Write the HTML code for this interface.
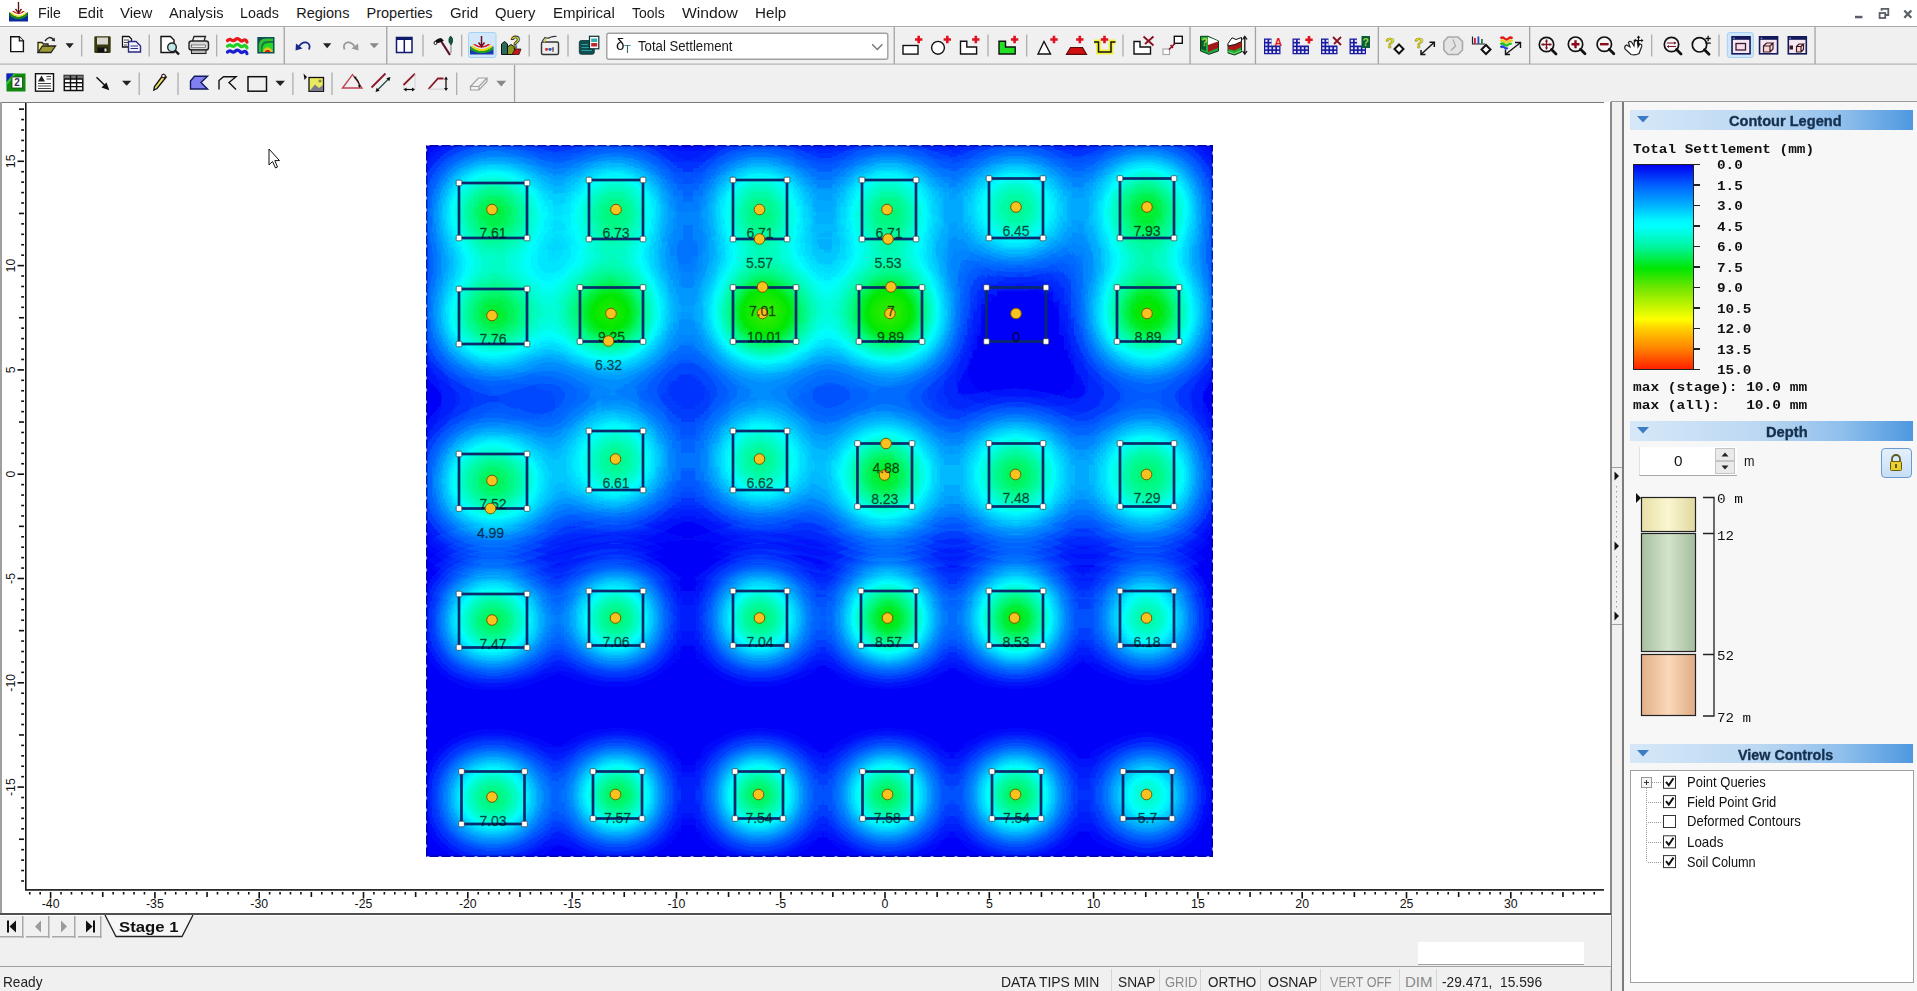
<!DOCTYPE html><html><head><meta charset="utf-8"><style>
*{box-sizing:border-box}
html,body{margin:0;padding:0}
body{width:1917px;height:991px;overflow:hidden;position:relative;background:#f0f0f0;font-family:"Liberation Sans",sans-serif;color:#000}
.a{position:absolute}
.t{position:absolute;white-space:nowrap;line-height:1}
</style></head><body>

<div class="a" style="left:0;top:0;width:1917px;height:26px;background:#fff"></div>
<div class="a" style="left:0;top:26px;width:1917px;height:1px;background:#a8a8a8"></div>
<div class="t" style="left:37.90px;top:6.03px;font-size:14.5px;font-family:'Liberation Sans',sans-serif;color:#1a1a1a;transform:scaleX(0.9761);transform-origin:0 0;">File</div>
<div class="t" style="left:77.50px;top:6.03px;font-size:14.5px;font-family:'Liberation Sans',sans-serif;color:#1a1a1a;transform:scaleX(1.0086);transform-origin:0 0;">Edit</div>
<div class="t" style="left:119.50px;top:6.03px;font-size:14.5px;font-family:'Liberation Sans',sans-serif;color:#1a1a1a;transform:scaleX(1.0335);transform-origin:0 0;">View</div>
<div class="t" style="left:168.70px;top:6.03px;font-size:14.5px;font-family:'Liberation Sans',sans-serif;color:#1a1a1a;transform:scaleX(1.0096);transform-origin:0 0;">Analysis</div>
<div class="t" style="left:240.30px;top:6.03px;font-size:14.5px;font-family:'Liberation Sans',sans-serif;color:#1a1a1a;transform:scaleX(0.9848);transform-origin:0 0;">Loads</div>
<div class="t" style="left:296.20px;top:6.03px;font-size:14.5px;font-family:'Liberation Sans',sans-serif;color:#1a1a1a;">Regions</div>
<div class="t" style="left:366.50px;top:6.03px;font-size:14.5px;font-family:'Liberation Sans',sans-serif;color:#1a1a1a;">Properties</div>
<div class="t" style="left:449.50px;top:6.03px;font-size:14.5px;font-family:'Liberation Sans',sans-serif;color:#1a1a1a;transform:scaleX(1.0295);transform-origin:0 0;">Grid</div>
<div class="t" style="left:495.30px;top:6.03px;font-size:14.5px;font-family:'Liberation Sans',sans-serif;color:#1a1a1a;transform:scaleX(1.0232);transform-origin:0 0;">Query</div>
<div class="t" style="left:552.50px;top:6.03px;font-size:14.5px;font-family:'Liberation Sans',sans-serif;color:#1a1a1a;transform:scaleX(1.0351);transform-origin:0 0;">Empirical</div>
<div class="t" style="left:632.00px;top:6.03px;font-size:14.5px;font-family:'Liberation Sans',sans-serif;color:#1a1a1a;transform:scaleX(0.9662);transform-origin:0 0;">Tools</div>
<div class="t" style="left:682.00px;top:6.03px;font-size:14.5px;font-family:'Liberation Sans',sans-serif;color:#1a1a1a;transform:scaleX(1.0802);transform-origin:0 0;">Window</div>
<div class="t" style="left:754.50px;top:6.03px;font-size:14.5px;font-family:'Liberation Sans',sans-serif;color:#1a1a1a;transform:scaleX(1.0465);transform-origin:0 0;">Help</div>
<svg class="a" style="left:0;top:0" width="1917" height="102" viewBox="0 0 1917 102">
<g><path d="M9 12 Q18.5 22 28 12 V21.5 H9Z" fill="#0a2aa0"/><path d="M9.5 12.5 Q18.5 21 27.5 12.5 V15.5 Q18.5 23 9.5 15.5Z" fill="#1a8a1a"/><path d="M10.5 11.5 Q18.5 19.5 26.5 11.5 L26.5 13 Q18.5 20.5 10.5 13Z" fill="#e8d800"/><path d="M12 11 Q18.5 17.5 25 11 L23 11 Q18.5 15 14 11Z" fill="#d01010"/><path d="M18.5 2 V12" stroke="#5a1010" stroke-width="1.3"/><path d="M15.5 9 L18.5 13 L21.5 9" fill="none" stroke="#5a1010" stroke-width="1.3"/></g>
<rect x="1855" y="15.8" width="7.4" height="2.5" fill="#5a6068"/>
<path d="M1881.6 10.8 V8.8 H1888.3 V15 H1886" fill="none" stroke="#5a6068" stroke-width="1.8"/><rect x="1879.6" y="13" width="5.6" height="5" fill="none" stroke="#5a6068" stroke-width="1.8"/>
<path d="M1904.3 10.5 L1911.3 17.8 M1911.3 10.5 L1904.3 17.8" stroke="#5a6068" stroke-width="2.2"/>
<rect x="0" y="27" width="1917" height="37" fill="#f0f0f0"/>
<rect x="0" y="65" width="1917" height="37" fill="#f0f0f0"/>
<rect x="0" y="63.5" width="1917" height="1.2" fill="#b4b4b4"/>
<rect x="0" y="27" width="1815" height="1" fill="#f8f8f8"/>
<rect x="283.59999999999997" y="27" width="1.3" height="37" fill="#a4a4a4"/>
<rect x="386.09999999999997" y="27" width="1.3" height="37" fill="#a4a4a4"/>
<rect x="893.6" y="27" width="1.3" height="37" fill="#a4a4a4"/>
<rect x="1189.4" y="27" width="1.3" height="37" fill="#a4a4a4"/>
<rect x="1254.8000000000002" y="27" width="1.3" height="37" fill="#a4a4a4"/>
<rect x="1377.7" y="27" width="1.3" height="37" fill="#a4a4a4"/>
<rect x="1529.0" y="27" width="1.3" height="37" fill="#a4a4a4"/>
<rect x="1814.4" y="27" width="1.3" height="37" fill="#a4a4a4"/>
<rect x="81.10000000000001" y="34.5" width="1.2" height="22" fill="#a8a8a8"/>
<rect x="148.6" y="34.5" width="1.2" height="22" fill="#a8a8a8"/>
<rect x="216.1" y="34.5" width="1.2" height="22" fill="#a8a8a8"/>
<rect x="422.4" y="34.5" width="1.2" height="22" fill="#a8a8a8"/>
<rect x="461.09999999999997" y="34.5" width="1.2" height="22" fill="#a8a8a8"/>
<rect x="528.6" y="34.5" width="1.2" height="22" fill="#a8a8a8"/>
<rect x="567.4" y="34.5" width="1.2" height="22" fill="#a8a8a8"/>
<rect x="987.4" y="34.5" width="1.2" height="22" fill="#a8a8a8"/>
<rect x="1026.1000000000001" y="34.5" width="1.2" height="22" fill="#a8a8a8"/>
<rect x="1122.4" y="34.5" width="1.2" height="22" fill="#a8a8a8"/>
<rect x="1651.1000000000001" y="34.5" width="1.2" height="22" fill="#a8a8a8"/>
<rect x="1718.4" y="34.5" width="1.2" height="22" fill="#a8a8a8"/>
<rect x="513.9" y="65" width="1.3" height="37" fill="#a4a4a4"/>
<rect x="138.6" y="72.5" width="1.2" height="22.5" fill="#a8a8a8"/>
<rect x="177.4" y="72.5" width="1.2" height="22.5" fill="#a8a8a8"/>
<rect x="292.29999999999995" y="72.5" width="1.2" height="22.5" fill="#a8a8a8"/>
<rect x="331.4" y="72.5" width="1.2" height="22.5" fill="#a8a8a8"/>
<rect x="456.09999999999997" y="72.5" width="1.2" height="22.5" fill="#a8a8a8"/>
<path d="M10.7 36.7 H19.3 L23.4 40.8 V51.6 H10.7Z" fill="#fff" stroke="#111" stroke-width="1.4"/><path d="M19.3 36.7 V40.8 H23.4" fill="#ddd" stroke="#111" stroke-width="1.2"/>
<path d="M38 52.5 V42.5 H42 L43.5 44 H48 V46" fill="#f2f08a" stroke="#222" stroke-width="1.3"/><path d="M38 52.5 L42.5 46 H55.5 L51 52.5Z" fill="#9c9a30" stroke="#222" stroke-width="1.3"/><path d="M45 41 Q49 35 53.5 39.5" fill="none" stroke="#222" stroke-width="1.4"/><path d="M51.5 40.5 L55 41.5 L54.5 37.5Z" fill="#222"/>
<path d="M65.5 43.2 H73.8 L69.65 48.2Z" fill="#222"/>
<rect x="94.3" y="36.3" width="16.4" height="16.6" rx="1.2" fill="#3a3a12"/><rect x="97" y="37.5" width="11" height="7" fill="#d8d8d0"/><rect x="97.5" y="47.5" width="10" height="5" fill="#111"/><rect x="104.5" y="48.5" width="2" height="3" fill="#eee"/>
<path d="M122.5 36.5 H129 L131.5 39 V47 H122.5Z" fill="#fff" stroke="#111" stroke-width="1.3"/><path d="M124 40 H129 M124 42.5 H129 M124 45 H127" stroke="#333" stroke-width="0.9"/><path d="M128.5 41.5 H136 L140.5 46 V52 H128.5Z" fill="#f4f4ff" stroke="#2a2a80" stroke-width="1.4"/><path d="M130.5 46 H138 M130.5 48.5 H138" stroke="#2a2a80" stroke-width="1"/>
<path d="M161 36.5 H170.5 L174 40 V52.5 H161Z" fill="#fff" stroke="#111" stroke-width="1.4"/><circle cx="172" cy="47.3" r="4.3" fill="#bfe8e8" stroke="#222" stroke-width="1.4"/><path d="M175 50.5 L179 54.5" stroke="#111" stroke-width="2.4"/>
<path d="M192.5 41 L194 36.5 H205.5 L204 41" fill="#f4f4f4" stroke="#222" stroke-width="1.3"/><rect x="189" y="41" width="19.5" height="9" rx="2.5" fill="#d8d8d8" stroke="#222" stroke-width="1.4"/><rect x="191.5" y="45" width="14" height="2.2" fill="#fff" stroke="#333" stroke-width="0.6"/><rect x="191.5" y="50" width="14.5" height="3.5" fill="#bbb" stroke="#222" stroke-width="1.1"/>
<path d="M227.5 40.5 q2 -2 4 -0.5 t4 -0.5 t4 0.2 t4 0.6 t3.5 1.8" fill="none" stroke="#e81818" stroke-width="3.2" stroke-linecap="round"/>
<path d="M227.5 46.2 q2 -2 4 -0.5 t4 -0.5 t4 0.2 t4 0.6 t3.5 1.8" fill="none" stroke="#20d020" stroke-width="3.2" stroke-linecap="round"/>
<path d="M227.5 52 q2 -2 4 -0.5 t4 -0.5 t4 0.2 t4 0.6 t3.5 1.8" fill="none" stroke="#1a20d0" stroke-width="3.2" stroke-linecap="round"/>
<rect x="257.3" y="37" width="17.2" height="16.5" fill="#0f4f5a"/><path d="M258.8 52 V46 Q258.8 38.6 266 38.6 H273 V52Z" fill="#30c030"/><path d="M261 52 V48 Q261 41 267.5 41 H273 V52Z" fill="#1a7a3a"/><path d="M262.5 52 V49 Q262.5 43 268.5 43 H273 V52Z" fill="#28d828"/><path d="M263 52 Q264.5 46.5 269 47.5 Q272 48.5 273 52Z" fill="#e8c020"/><path d="M264.5 52 Q266 49.5 268.5 50 Q270 50.5 270.5 52Z" fill="#c02010"/>
<path d="M299 46.5 Q302 41.5 306.5 42.5 Q311 44 309 49.5" fill="none" stroke="#1a2a8a" stroke-width="1.8"/><path d="M295.5 50.5 L296 43.5 L302.5 48.5Z" fill="#1a2a8a"/>
<path d="M323 43.2 H331.3 L327.15 48.2Z" fill="#222"/>
<path d="M354.5 46.5 Q351.5 41.5 347 42.5 Q342.5 44 344.5 49.5" fill="none" stroke="#999" stroke-width="1.8"/><path d="M358.5 50.5 L358 43.5 L351.5 48.5Z" fill="#999"/>
<path d="M369.6 43.2 H378.8 L374.2 48.2Z" fill="#888"/>
<rect x="396.5" y="37.5" width="15.5" height="15" fill="#fff" stroke="#0f1a6a" stroke-width="1.5"/><rect x="396.5" y="37.5" width="15.5" height="2.5" fill="#0f1a6a"/><path d="M404.3 38 V52.5" stroke="#0f1a6a" stroke-width="1.5"/>
<path d="M441 41 L450 55" stroke="#5a1424" stroke-width="2.2"/><path d="M434 42.5 Q436 38.5 441 38 L444 40.5 L438.5 43Z" fill="#111"/><circle cx="435.5" cy="43" r="1.5" fill="#fff" stroke="#111" stroke-width="1"/><path d="M450.5 36 Q453.5 38 452.5 42 L451 45 L449 42 Q448.5 38 450.5 36Z" fill="#0f5a3a" stroke="#0a3a2a" stroke-width="0.8"/><path d="M451 45 V53" stroke="#666" stroke-width="0.8"/>
<rect x="468.5" y="32.5" width="27.5" height="25" rx="2" fill="#d2e8fa" stroke="#a6d0f2" stroke-width="1"/>
<path d="M470 46 Q481.5 57 493.5 46 V54.5 H470Z" fill="#1a3ab0"/><path d="M470.5 46.5 Q481.5 55 493 46.5 V49.5 Q481.5 57 470.5 49.5Z" fill="#20a020"/><path d="M471.5 45 Q481.5 53 492 45 V47 Q481.5 55 471.5 47Z" fill="#f0d800"/><path d="M473 44.5 Q481.5 51 490.5 44.5 L488 44 Q481.5 48.5 475 44Z" fill="#e01818"/><path d="M481.5 36 V46" stroke="#6a1020" stroke-width="1.5"/><path d="M478.5 42.5 L481.5 46.5 L484.5 42.5" fill="none" stroke="#6a1020" stroke-width="1.5"/>
<path d="M501.5 54.5 V44 L504.5 41.5 L507.5 44 V54.5Z" fill="#2a6a5a" stroke="#111" stroke-width="1"/><path d="M507.5 54.5 V47 L511 44.5 L514.5 47 V54.5Z" fill="#8a9a20" stroke="#111" stroke-width="1"/><path d="M512 54.5 L515 49 H521 L519 54.5Z" fill="#c01818" stroke="#311" stroke-width="0.8"/><text x="510.5" y="48" font-family="Liberation Sans" font-weight="bold" font-size="16" fill="#f0f030" stroke="#222" stroke-width="0.8">?</text>
<rect x="541.5" y="42" width="17" height="12.5" rx="1.5" fill="#eee" stroke="#333" stroke-width="1.4"/><path d="M542 41.5 L545 37.5 Q548 39 551 37 Q554 36 556.5 36.5" fill="none" stroke="#333" stroke-width="1.2"/><path d="M544 42.5 L546 38.5" stroke="#c8c020" stroke-width="1.2"/><path d="M545 49 H554" stroke="#666" stroke-width="0.8"/><circle cx="546.5" cy="49.5" r="1.4" fill="#d03030"/><circle cx="550" cy="49.5" r="1.4" fill="#3050c0"/><path d="M553 47 V52" stroke="#222" stroke-width="0.9"/>
<rect x="579.3" y="40.5" width="15" height="13.8" rx="2" fill="#0f4f4f" stroke="#0a3030" stroke-width="0.8"/><path d="M581.5 44.5 H588 M581.5 47.5 H592 M581.5 50.5 H592" stroke="#2aa0a0" stroke-width="1.2"/><rect x="589.5" y="36.3" width="9.3" height="12.5" fill="#fff" stroke="#0a3030" stroke-width="1.2"/><rect x="591.2" y="38.5" width="6" height="3.5" fill="#30b0b0"/><rect x="591.2" y="43" width="6" height="3.5" fill="#c02828"/>
<rect x="606.8" y="33.2" width="281" height="26" rx="2" fill="#fff" stroke="#a0a0a0" stroke-width="1.4"/>
<path d="M872.2 44.2 L877.3 49.5 L882.4 44.2" fill="none" stroke="#777" stroke-width="1.4"/>
<rect x="903" y="45.5" width="15" height="8.6" fill="#fff" stroke="#111" stroke-width="1.4"/>
<path d="M915.0 39.5 H922.4000000000001 M918.7 35.8 V43.2" stroke="#e01020" stroke-width="2.6"/>
<circle cx="938" cy="47.8" r="6.4" fill="#fff" stroke="#111" stroke-width="1.4"/>
<path d="M943.5999999999999 39.5 H951.0 M947.3 35.8 V43.2" stroke="#e01020" stroke-width="2.6"/>
<path d="M960.5 41.2 H966.8 V47 H976.6 V54 H960.5Z" fill="#fff" stroke="#111" stroke-width="1.4"/>
<path d="M972.0999999999999 39.5 H979.5 M975.8 35.8 V43.2" stroke="#e01020" stroke-width="2.6"/>
<path d="M999 41.2 H1005.5 V47 H1015.2 V54 H999Z" fill="#22e022" stroke="#111" stroke-width="1.4"/>
<path d="M1010.9 39.5 H1018.3000000000001 M1014.6 35.8 V43.2" stroke="#e01020" stroke-width="2.6"/>
<path d="M1038 54 L1044 41.5 L1050.5 54Z" fill="#fff" stroke="#111" stroke-width="1.4"/>
<path d="M1050.3 39.5 H1057.7 M1054 35.8 V43.2" stroke="#e01020" stroke-width="2.6"/>
<path d="M1066.5 54.3 L1070.5 47.5 H1082.5 L1086.5 54.3Z" fill="#d01010" stroke="#5a0a0a" stroke-width="1.2"/>
<path d="M1076.1 39.5 H1083.5 M1079.8 35.8 V43.2" stroke="#e01020" stroke-width="2.6"/>
<path d="M1094 42 H1098.5 V52 H1111 V42 H1115.5" fill="none" stroke="#f4f040" stroke-width="5"/><path d="M1094 42 H1098.5 V52 H1111 V42 H1115.5" fill="none" stroke="#111" stroke-width="1.5"/>
<path d="M1100.8 39.5 H1108.2 M1104.5 35.8 V43.2" stroke="#e01020" stroke-width="2.6"/>
<path d="M1134 41.5 H1140 V47 H1150.5 V54 H1134Z" fill="#fff" stroke="#111" stroke-width="1.4"/><path d="M1143.5 36.5 L1153.5 45.5 M1153.5 36.5 L1145 44" stroke="#8a1020" stroke-width="1.8"/>
<rect x="1163" y="49" width="6.5" height="5.5" fill="#fff" stroke="#aaa" stroke-width="1.2"/><rect x="1174.3" y="36.3" width="8" height="7" fill="#fff" stroke="#111" stroke-width="1.4"/><path d="M1169 49.5 L1175 43.5" stroke="#8a1020" stroke-width="1.6"/><path d="M1170.5 45 L1173 48" stroke="#8a1020" stroke-width="1.3"/>
<path d="M1200.5 36.3 H1208 L1218.5 41 V51 L1209 54.3 L1200.5 51Z" fill="#22aa44" stroke="#0a3a14" stroke-width="1"/><path d="M1208 37 L1218 41 V46 L1208 50Z" fill="#fff"/><path d="M1208 45 L1218 41.5 V48 L1208 52Z" fill="#a01818"/><path d="M1201 40 H1206 V51 L1201 49Z" fill="#0a5a2a"/><text x="1201.5" y="46" font-family="Liberation Sans" font-weight="bold" font-size="10" fill="#b8d830">?</text>
<path d="M1228 44.5 L1235 40 L1241.5 41.5 V52 L1234.5 55 L1228 53Z" fill="#22aa33" stroke="#0a2a10" stroke-width="0.9"/><path d="M1228 44.5 L1235 40 L1241.5 41.5 V47 L1234.5 50.5 L1228 49Z" fill="#a81818"/><path d="M1228 43.5 L1232 37.8 L1236 39.5 L1241.5 37.5 V41.5 L1235 44.5 L1228 46Z" fill="#fff" stroke="#111" stroke-width="1"/><path d="M1228 51.5 L1234.5 53.5 L1241.5 50.5" fill="none" stroke="#7aea7a" stroke-width="0.9"/>
<path d="M1244.8 37 V53.5" stroke="#111" stroke-width="1.3"/><path d="M1242.6 39.5 L1244.8 36.3 L1247 39.5 M1242.6 51 L1244.8 54.2 L1247 51" fill="none" stroke="#111" stroke-width="1.3"/>
<path d="M1264 54.3 V38.5 H1271.5 V45.5 H1280.5 V54.3Z" fill="#1a1aa0"/>
<rect x="1265.3" y="39.8" width="2.2" height="2.1" fill="#e8e8ff"/>
<rect x="1269.2" y="39.8" width="2.2" height="2.1" fill="#e8e8ff"/>
<rect x="1265.3" y="43.5" width="2.2" height="2.1" fill="#e8e8ff"/>
<rect x="1269.2" y="43.5" width="2.2" height="2.1" fill="#e8e8ff"/>
<rect x="1265.3" y="47.2" width="2.2" height="2.1" fill="#e8e8ff"/>
<rect x="1269.2" y="47.2" width="2.2" height="2.1" fill="#e8e8ff"/>
<rect x="1273.1" y="47.2" width="2.2" height="2.1" fill="#e8e8ff"/>
<rect x="1277.0" y="47.2" width="2.2" height="2.1" fill="#e8e8ff"/>
<rect x="1265.3" y="50.9" width="2.2" height="2.1" fill="#e8e8ff"/>
<rect x="1269.2" y="50.9" width="2.2" height="2.1" fill="#e8e8ff"/>
<rect x="1273.1" y="50.9" width="2.2" height="2.1" fill="#e8e8ff"/>
<rect x="1277.0" y="50.9" width="2.2" height="2.1" fill="#e8e8ff"/>
<text x="1274.5" y="46" font-family="Liberation Sans" font-weight="bold" font-size="10.5" fill="#e01818">A</text>
<path d="M1292.5 54.3 V38.5 H1300.0 V45.5 H1309.0 V54.3Z" fill="#1a1aa0"/>
<rect x="1293.8" y="39.8" width="2.2" height="2.1" fill="#e8e8ff"/>
<rect x="1297.7" y="39.8" width="2.2" height="2.1" fill="#e8e8ff"/>
<rect x="1293.8" y="43.5" width="2.2" height="2.1" fill="#e8e8ff"/>
<rect x="1297.7" y="43.5" width="2.2" height="2.1" fill="#e8e8ff"/>
<rect x="1293.8" y="47.2" width="2.2" height="2.1" fill="#e8e8ff"/>
<rect x="1297.7" y="47.2" width="2.2" height="2.1" fill="#e8e8ff"/>
<rect x="1301.6" y="47.2" width="2.2" height="2.1" fill="#e8e8ff"/>
<rect x="1305.5" y="47.2" width="2.2" height="2.1" fill="#e8e8ff"/>
<rect x="1293.8" y="50.9" width="2.2" height="2.1" fill="#e8e8ff"/>
<rect x="1297.7" y="50.9" width="2.2" height="2.1" fill="#e8e8ff"/>
<rect x="1301.6" y="50.9" width="2.2" height="2.1" fill="#e8e8ff"/>
<rect x="1305.5" y="50.9" width="2.2" height="2.1" fill="#e8e8ff"/>
<path d="M1305.3 39.8 H1312.7 M1309 36.099999999999994 V43.5" stroke="#e01020" stroke-width="2.6"/>
<path d="M1321 54.3 V38.5 H1328.5 V45.5 H1337.5 V54.3Z" fill="#1a1aa0"/>
<rect x="1322.3" y="39.8" width="2.2" height="2.1" fill="#e8e8ff"/>
<rect x="1326.2" y="39.8" width="2.2" height="2.1" fill="#e8e8ff"/>
<rect x="1322.3" y="43.5" width="2.2" height="2.1" fill="#e8e8ff"/>
<rect x="1326.2" y="43.5" width="2.2" height="2.1" fill="#e8e8ff"/>
<rect x="1322.3" y="47.2" width="2.2" height="2.1" fill="#e8e8ff"/>
<rect x="1326.2" y="47.2" width="2.2" height="2.1" fill="#e8e8ff"/>
<rect x="1330.1" y="47.2" width="2.2" height="2.1" fill="#e8e8ff"/>
<rect x="1334.0" y="47.2" width="2.2" height="2.1" fill="#e8e8ff"/>
<rect x="1322.3" y="50.9" width="2.2" height="2.1" fill="#e8e8ff"/>
<rect x="1326.2" y="50.9" width="2.2" height="2.1" fill="#e8e8ff"/>
<rect x="1330.1" y="50.9" width="2.2" height="2.1" fill="#e8e8ff"/>
<rect x="1334.0" y="50.9" width="2.2" height="2.1" fill="#e8e8ff"/>
<path d="M1333 37 L1341 45 M1341 37 L1334 44" stroke="#8a1020" stroke-width="1.8"/>
<path d="M1349.5 54.3 V38.5 H1357.0 V45.5 H1366.0 V54.3Z" fill="#1a1aa0"/>
<rect x="1350.8" y="39.8" width="2.2" height="2.1" fill="#e8e8ff"/>
<rect x="1354.7" y="39.8" width="2.2" height="2.1" fill="#e8e8ff"/>
<rect x="1350.8" y="43.5" width="2.2" height="2.1" fill="#e8e8ff"/>
<rect x="1354.7" y="43.5" width="2.2" height="2.1" fill="#e8e8ff"/>
<rect x="1350.8" y="47.2" width="2.2" height="2.1" fill="#e8e8ff"/>
<rect x="1354.7" y="47.2" width="2.2" height="2.1" fill="#e8e8ff"/>
<rect x="1358.6" y="47.2" width="2.2" height="2.1" fill="#e8e8ff"/>
<rect x="1362.5" y="47.2" width="2.2" height="2.1" fill="#e8e8ff"/>
<rect x="1350.8" y="50.9" width="2.2" height="2.1" fill="#e8e8ff"/>
<rect x="1354.7" y="50.9" width="2.2" height="2.1" fill="#e8e8ff"/>
<rect x="1358.6" y="50.9" width="2.2" height="2.1" fill="#e8e8ff"/>
<rect x="1362.5" y="50.9" width="2.2" height="2.1" fill="#e8e8ff"/>
<rect x="1361.5" y="36" width="8.5" height="12" fill="#0a5a3a"/><text x="1362.5" y="46" font-family="Liberation Sans" font-weight="bold" font-size="10.5" fill="#9ad840">?</text>
<text x="1385.5" y="48" font-family="Liberation Sans" font-weight="bold" font-size="15" fill="#f4f020" stroke="#8a8a10" stroke-width="0.6">?</text>
<path d="M1399 44.5 L1403.5 49 L1399 53.5 L1394.5 49Z" fill="#fff" stroke="#111" stroke-width="2"/>
<text x="1414.5" y="48" font-family="Liberation Sans" font-weight="bold" font-size="15" fill="#f4f020" stroke="#8a8a10" stroke-width="0.6">?</text>
<path d="M1421.5 54 L1434 42.5" stroke="#111" stroke-width="1.4"/><path d="M1421 50 V54.5 H1425.5 M1429.5 42.3 H1434.3 V47" fill="none" stroke="#111" stroke-width="1.5"/>
<path d="M1448 37 H1458 L1462.5 41.5 V50 L1458 54.5 H1448 L1443.8 50 V41.5Z" fill="#e4e4e4" stroke="#a8a8a8" stroke-width="1.6"/><path d="M1453 39.5 L1455.5 46 L1451 50.5" fill="none" stroke="#a8a8a8" stroke-width="1.2"/>
<path d="M1472.5 36.5 V44 H1485" stroke="#222" stroke-width="1.2" fill="none"/><rect x="1474" y="38" width="1.8" height="6" fill="#c02040"/><rect x="1477.5" y="36.5" width="1.8" height="7.5" fill="#3040c0"/><rect x="1481" y="39" width="1.8" height="5" fill="#208040"/><path d="M1486 45 L1490.5 49.5 L1486 54 L1481.5 49.5Z" fill="#fff" stroke="#111" stroke-width="2"/>
<path d="M1500.5 38.5 q2 -2 4 0 t4 0 t4 0" fill="none" stroke="#e01818" stroke-width="2.2"/><path d="M1500.5 41.5 q2 -2 4 0 t4 0 t4 0" fill="none" stroke="#f0d020" stroke-width="2.2"/><path d="M1500.5 44.5 q2 -2 4 0 t4 0 t3 0" fill="none" stroke="#20c020" stroke-width="2.2"/><path d="M1500.5 47.5 q2 -2 4 0 t3 0" fill="none" stroke="#2040e0" stroke-width="2.2"/><path d="M1506 54 L1520 43" stroke="#111" stroke-width="1.3"/><path d="M1505.5 49.5 V54.5 H1510 M1515 42.5 H1520.5 V48" fill="none" stroke="#111" stroke-width="1.4"/>
<circle cx="1546.5" cy="44.5" r="7.2" fill="#f4f4f4" stroke="#111" stroke-width="1.7"/><path d="M1551.5 49.5 L1556.0 54.0" stroke="#111" stroke-width="2.8" stroke-linecap="round"/>
<path d="M1541.5 44.5 H1551.5 M1546.5 39.5 V49.5" stroke="#7a1020" stroke-width="1.3"/><path d="M1541.5 44.5 l2 -1.6 v3.2z M1551.5 44.5 l-2 -1.6 v3.2z M1546.5 39.5 l-1.6 2 h3.2z M1546.5 49.5 l-1.6 -2 h3.2z" fill="#7a1020"/>
<circle cx="1575.5" cy="44.2" r="7.2" fill="#f4f4f4" stroke="#111" stroke-width="1.7"/><path d="M1580.5 49.2 L1585.0 53.7" stroke="#111" stroke-width="2.8" stroke-linecap="round"/>
<path d="M1571.5 44.2 H1579.5 M1575.5 40.2 V48.2" stroke="#8a0a1a" stroke-width="2.4"/>
<circle cx="1604.3" cy="44.2" r="7.2" fill="#f4f4f4" stroke="#111" stroke-width="1.7"/><path d="M1609.3 49.2 L1613.8 53.7" stroke="#111" stroke-width="2.8" stroke-linecap="round"/>
<path d="M1600 44.2 H1608.6" stroke="#8a0a1a" stroke-width="2.4"/>
<path d="M1625 49 Q1624 46 1626.5 45 L1630 47 L1628.5 42.5 Q1629.5 40.5 1631.5 42 L1634 46 L1634.5 40.5 Q1636.5 39.5 1637.5 41.5 L1638 47 L1640 44 Q1642.5 44 1641.5 47 L1639 53.5 Q1636 55.5 1631 54.5Z" fill="#fff" stroke="#222" stroke-width="1.2"/><path d="M1638.5 36.5 V44.5 M1634.5 40.5 H1642.5" stroke="#111" stroke-width="1.2"/><path d="M1638.5 35.5 l-1.8 2.2 h3.6z M1638.5 45.5 l-1.8 -2.2 h3.6z M1633.5 40.5 l2.2 -1.8 v3.6z M1643.5 40.5 l-2.2 -1.8 v3.6z" fill="#111"/>
<circle cx="1671.5" cy="44.5" r="7.2" fill="#f4f4f4" stroke="#111" stroke-width="1.7"/><path d="M1676.5 49.5 L1681.0 54.0" stroke="#111" stroke-width="2.8" stroke-linecap="round"/>
<path d="M1667 43 H1676 M1667 46.5 H1676" stroke="#7a1020" stroke-width="1.1"/><path d="M1676 43 l-2 -1.5 v3z M1667 46.5 l2 -1.5 v3z" fill="#7a1020"/>
<circle cx="1699.5" cy="44.8" r="7.2" fill="#f4f4f4" stroke="#111" stroke-width="1.7"/><path d="M1704.5 49.8 L1709.0 54.3" stroke="#111" stroke-width="2.8" stroke-linecap="round"/>
<path d="M1705.5 38.5 H1710.8 M1708.15 35.8 V41.2 M1705.5 43.2 H1710.8" stroke="#111" stroke-width="1.3"/>
<rect x="1727.3" y="32.5" width="26" height="25" rx="2.5" fill="#cfe6fb" stroke="#a6d0f2" stroke-width="1"/>
<rect x="1732.05" y="36.8" width="18" height="17" fill="#f6e8f0" stroke="#141a5a" stroke-width="1.6"/><rect x="1732.05" y="36.8" width="18" height="3" fill="#141a5a"/><rect x="1733.25" y="37.6" width="1.5" height="1.2" fill="#8aa0ff"/>
<rect x="1736" y="43.5" width="9.5" height="6.5" fill="#f4dce8" stroke="#3a1a2a" stroke-width="1.3"/>
<rect x="1759.55" y="36.8" width="18" height="17" fill="#f6e8f0" stroke="#141a5a" stroke-width="1.6"/><rect x="1759.55" y="36.8" width="18" height="3" fill="#141a5a"/><rect x="1760.75" y="37.6" width="1.5" height="1.2" fill="#8aa0ff"/>
<path d="M1763.5 46 H1770 V52 H1763.5Z M1763.5 46 L1766.5 43 H1773 L1770 46 M1773 43 V49 L1770 52" fill="#fad8d0" stroke="#3a1a2a" stroke-width="1.2"/>
<rect x="1788.3" y="36.8" width="18" height="17" fill="#f6e8f0" stroke="#141a5a" stroke-width="1.6"/><rect x="1788.3" y="36.8" width="18" height="3" fill="#141a5a"/><rect x="1789.5" y="37.6" width="1.5" height="1.2" fill="#8aa0ff"/>
<rect x="1789.5" y="45.5" width="3.5" height="4" fill="#3a1a2a"/><path d="M1796.5 46.5 H1801 V52 H1796.5Z M1796.5 46.5 L1799 44 H1803.5 L1801 46.5 M1803.5 44 V49.5 L1801 52" fill="#fad8d0" stroke="#3a1a2a" stroke-width="1.2"/>
<rect x="6.5" y="73.5" width="19" height="18" fill="#108a10"/><path d="M6.5 73.5 H14 L6.5 82Z" fill="#1a1ad0"/><path d="M6.5 82 L14 73.5 H16 L6.5 86Z" fill="#30c030"/><rect x="12" y="77" width="10.5" height="11" fill="#fff" stroke="#0a4a0a" stroke-width="0.8"/><text x="14.2" y="86.3" font-family="Liberation Sans" font-weight="bold" font-size="10" fill="#3a2a5a">2</text>
<rect x="35.5" y="73.7" width="18" height="17.5" fill="#fff" stroke="#111" stroke-width="1.4"/><path d="M38 81.5 L41.5 75.5 L45 81.5Z" fill="#222"/><path d="M46.5 76.5 H51 M46.5 79 H51 M38 83.5 H51 M38 86 H51 M38 88.5 H51" stroke="#444" stroke-width="1.1"/>
<rect x="64.3" y="75.5" width="18.5" height="15" fill="#fff" stroke="#111" stroke-width="1.5"/><rect x="64.3" y="75.5" width="18.5" height="3.5" fill="#777"/><path d="M64.3 79 H82.8 M64.3 82.8 H82.8 M64.3 86.6 H82.8 M70.5 75.5 V90.5 M76.6 75.5 V90.5" stroke="#111" stroke-width="1.4"/>
<path d="M96.5 77.3 L105 85.5" stroke="#111" stroke-width="1.5"/><path d="M109.3 90.3 L101.5 87.5 L106.5 82.5Z" fill="#111"/>
<path d="M122 80.8 H131.3 L126.65 85.8Z" fill="#222"/>
<path d="M163.5 74.5 L166.3 77 L157 88.5 L153.8 90 L154.5 86.5Z" fill="#e8e060" stroke="#111" stroke-width="1.3"/><path d="M162 76.3 L164.8 78.8" stroke="#111" stroke-width="1"/><circle cx="163.5" cy="76" r="1.8" fill="#fff" stroke="#311" stroke-width="1.1"/>
<path d="M190.5 81 L194.5 76.2 H207.5 L201 82.5 L207.5 89 H190.5Z" fill="#8080f0" stroke="#111a5a" stroke-width="1.4"/>
<path d="M219 89.5 V80.5 L223.5 76.7 H236 L229 82.5 L236 89.5" fill="none" stroke="#111" stroke-width="1.4"/>
<rect x="248" y="76.7" width="18.5" height="14.5" fill="none" stroke="#111" stroke-width="1.5"/>
<path d="M275.4 80.8 H285 L280.2 86Z" fill="#222"/>
<path d="M303.5 73.5 L307 77 L304.5 80Z" fill="#111"/><rect x="309" y="77.5" width="14.5" height="13.8" fill="#eaea60" stroke="#111" stroke-width="1.3"/><path d="M309.5 91 L315 84.5 L319 88 L323 85 V91Z" fill="#7a7a8a"/><circle cx="320" cy="81" r="1.6" fill="#8a8a40"/>
<path d="M342.5 88 L352.5 74.5 L362 88Z" fill="none" stroke="#c04050" stroke-width="1.3"/><path d="M355.5 78 Q359.5 82 359.5 87" fill="none" stroke="#111" stroke-width="1.1"/><path d="M353.5 76.5 l3.2 0.3 -1.5 2.5z M359.5 88 l-1.6 -2.8 h3.2z" fill="#111"/>
<path d="M371.5 87.5 L385.5 73.5" stroke="#8a1a2a" stroke-width="1.8"/><path d="M376.5 91 L389.5 78" stroke="#2a4a4a" stroke-width="1.2"/><path d="M375.5 92 l1.2 -4.2 3 3z M390.5 77 l-4.2 1.2 3 3z" fill="#111"/>
<path d="M403.5 85 L415 73.7" stroke="#8a1a2a" stroke-width="1.8"/><path d="M415 74 V89 M403.5 85 V90" stroke="#ccc" stroke-width="0.8"/><path d="M405 89.5 H413.5" stroke="#111" stroke-width="1.2"/><path d="M403.5 89.5 l3 -2 v4z M415 89.5 l-3 -2 v4z" fill="#111"/>
<path d="M428.5 89 L438 78.5 H443.5" stroke="#8a1a2a" stroke-width="1.8" fill="none"/><path d="M428.5 89.2 H444" stroke="#ccc" stroke-width="1"/><path d="M446 78.5 V89" stroke="#111" stroke-width="1.3"/><path d="M446 76.5 l-2 3 h4z M446 91 l-2 -3 h4z" fill="#111"/>
<path d="M470.5 86.5 L478.5 78 H487 L479 86.5Z M470.5 86.5 V90 H479 L487 81.5 V78 M479 86.5 V90" fill="#f4f4f4" stroke="#a0a0a0" stroke-width="1.2"/>
<path d="M496.3 80.8 H506.2 L501.25 86.5Z" fill="#888"/>
</svg>
<div class="t" style="left:638.30px;top:37.90px;font-size:15px;font-family:'Liberation Sans',sans-serif;color:#1a1a1a;transform:scaleX(0.8784);transform-origin:0 0;">Total Settlement</div>
<div class="t" style="left:615.80px;top:37.06px;font-size:16px;font-family:'Liberation Sans',sans-serif;color:#111;transform:scaleX(0.9544);transform-origin:0 0;">δ</div>
<div class="t" style="left:624.00px;top:44.19px;font-size:11px;font-family:'Liberation Sans',sans-serif;color:#2a6a6a;transform:scaleX(1.0419);transform-origin:0 0;">T</div>
<div class="a" style="left:0;top:102px;width:1612px;height:814px;background:#fff"></div>
<div class="a" style="left:0;top:102px;width:1604px;height:1px;background:#7a7a7a"></div>
<div class="a" style="left:0;top:102px;width:2px;height:812px;background:#a0a0a0"></div>
<div class="a" style="left:1610px;top:102px;width:2px;height:813px;background:#8a8a8a"></div>
<div class="a" style="left:0;top:913px;width:1612px;height:2px;background:#505050"></div>
<svg class="a" style="left:0;top:0" width="1612" height="916">
<rect x="25" y="103" width="1.6" height="787" fill="#1a1a1a"/>
<rect x="25" y="889" width="1579" height="1.8" fill="#2a2a2a"/>
<rect x="28.94" y="892" width="1.6" height="2.5" fill="#111"/>
<rect x="39.37" y="892" width="1.6" height="2.5" fill="#111"/>
<rect x="49.80" y="892" width="1.6" height="6.5" fill="#111"/>
<text x="50.60" y="908" font-family="Liberation Sans" font-size="12.3" text-anchor="middle" fill="#111">-40</text>
<rect x="60.23" y="892" width="1.6" height="2.5" fill="#111"/>
<rect x="70.66" y="892" width="1.6" height="2.5" fill="#111"/>
<rect x="81.09" y="892" width="1.6" height="2.5" fill="#111"/>
<rect x="91.52" y="892" width="1.6" height="2.5" fill="#111"/>
<rect x="101.95" y="892" width="1.6" height="5" fill="#111"/>
<rect x="112.38" y="892" width="1.6" height="2.5" fill="#111"/>
<rect x="122.81" y="892" width="1.6" height="2.5" fill="#111"/>
<rect x="133.24" y="892" width="1.6" height="2.5" fill="#111"/>
<rect x="143.67" y="892" width="1.6" height="2.5" fill="#111"/>
<rect x="154.10" y="892" width="1.6" height="6.5" fill="#111"/>
<text x="154.90" y="908" font-family="Liberation Sans" font-size="12.3" text-anchor="middle" fill="#111">-35</text>
<rect x="164.53" y="892" width="1.6" height="2.5" fill="#111"/>
<rect x="174.96" y="892" width="1.6" height="2.5" fill="#111"/>
<rect x="185.39" y="892" width="1.6" height="2.5" fill="#111"/>
<rect x="195.82" y="892" width="1.6" height="2.5" fill="#111"/>
<rect x="206.25" y="892" width="1.6" height="5" fill="#111"/>
<rect x="216.68" y="892" width="1.6" height="2.5" fill="#111"/>
<rect x="227.11" y="892" width="1.6" height="2.5" fill="#111"/>
<rect x="237.54" y="892" width="1.6" height="2.5" fill="#111"/>
<rect x="247.97" y="892" width="1.6" height="2.5" fill="#111"/>
<rect x="258.40" y="892" width="1.6" height="6.5" fill="#111"/>
<text x="259.20" y="908" font-family="Liberation Sans" font-size="12.3" text-anchor="middle" fill="#111">-30</text>
<rect x="268.83" y="892" width="1.6" height="2.5" fill="#111"/>
<rect x="279.26" y="892" width="1.6" height="2.5" fill="#111"/>
<rect x="289.69" y="892" width="1.6" height="2.5" fill="#111"/>
<rect x="300.12" y="892" width="1.6" height="2.5" fill="#111"/>
<rect x="310.55" y="892" width="1.6" height="5" fill="#111"/>
<rect x="320.98" y="892" width="1.6" height="2.5" fill="#111"/>
<rect x="331.41" y="892" width="1.6" height="2.5" fill="#111"/>
<rect x="341.84" y="892" width="1.6" height="2.5" fill="#111"/>
<rect x="352.27" y="892" width="1.6" height="2.5" fill="#111"/>
<rect x="362.70" y="892" width="1.6" height="6.5" fill="#111"/>
<text x="363.50" y="908" font-family="Liberation Sans" font-size="12.3" text-anchor="middle" fill="#111">-25</text>
<rect x="373.13" y="892" width="1.6" height="2.5" fill="#111"/>
<rect x="383.56" y="892" width="1.6" height="2.5" fill="#111"/>
<rect x="393.99" y="892" width="1.6" height="2.5" fill="#111"/>
<rect x="404.42" y="892" width="1.6" height="2.5" fill="#111"/>
<rect x="414.85" y="892" width="1.6" height="5" fill="#111"/>
<rect x="425.28" y="892" width="1.6" height="2.5" fill="#111"/>
<rect x="435.71" y="892" width="1.6" height="2.5" fill="#111"/>
<rect x="446.14" y="892" width="1.6" height="2.5" fill="#111"/>
<rect x="456.57" y="892" width="1.6" height="2.5" fill="#111"/>
<rect x="467.00" y="892" width="1.6" height="6.5" fill="#111"/>
<text x="467.80" y="908" font-family="Liberation Sans" font-size="12.3" text-anchor="middle" fill="#111">-20</text>
<rect x="477.43" y="892" width="1.6" height="2.5" fill="#111"/>
<rect x="487.86" y="892" width="1.6" height="2.5" fill="#111"/>
<rect x="498.29" y="892" width="1.6" height="2.5" fill="#111"/>
<rect x="508.72" y="892" width="1.6" height="2.5" fill="#111"/>
<rect x="519.15" y="892" width="1.6" height="5" fill="#111"/>
<rect x="529.58" y="892" width="1.6" height="2.5" fill="#111"/>
<rect x="540.01" y="892" width="1.6" height="2.5" fill="#111"/>
<rect x="550.44" y="892" width="1.6" height="2.5" fill="#111"/>
<rect x="560.87" y="892" width="1.6" height="2.5" fill="#111"/>
<rect x="571.30" y="892" width="1.6" height="6.5" fill="#111"/>
<text x="572.10" y="908" font-family="Liberation Sans" font-size="12.3" text-anchor="middle" fill="#111">-15</text>
<rect x="581.73" y="892" width="1.6" height="2.5" fill="#111"/>
<rect x="592.16" y="892" width="1.6" height="2.5" fill="#111"/>
<rect x="602.59" y="892" width="1.6" height="2.5" fill="#111"/>
<rect x="613.02" y="892" width="1.6" height="2.5" fill="#111"/>
<rect x="623.45" y="892" width="1.6" height="5" fill="#111"/>
<rect x="633.88" y="892" width="1.6" height="2.5" fill="#111"/>
<rect x="644.31" y="892" width="1.6" height="2.5" fill="#111"/>
<rect x="654.74" y="892" width="1.6" height="2.5" fill="#111"/>
<rect x="665.17" y="892" width="1.6" height="2.5" fill="#111"/>
<rect x="675.60" y="892" width="1.6" height="6.5" fill="#111"/>
<text x="676.40" y="908" font-family="Liberation Sans" font-size="12.3" text-anchor="middle" fill="#111">-10</text>
<rect x="686.03" y="892" width="1.6" height="2.5" fill="#111"/>
<rect x="696.46" y="892" width="1.6" height="2.5" fill="#111"/>
<rect x="706.89" y="892" width="1.6" height="2.5" fill="#111"/>
<rect x="717.32" y="892" width="1.6" height="2.5" fill="#111"/>
<rect x="727.75" y="892" width="1.6" height="5" fill="#111"/>
<rect x="738.18" y="892" width="1.6" height="2.5" fill="#111"/>
<rect x="748.61" y="892" width="1.6" height="2.5" fill="#111"/>
<rect x="759.04" y="892" width="1.6" height="2.5" fill="#111"/>
<rect x="769.47" y="892" width="1.6" height="2.5" fill="#111"/>
<rect x="779.90" y="892" width="1.6" height="6.5" fill="#111"/>
<text x="780.70" y="908" font-family="Liberation Sans" font-size="12.3" text-anchor="middle" fill="#111">-5</text>
<rect x="790.33" y="892" width="1.6" height="2.5" fill="#111"/>
<rect x="800.76" y="892" width="1.6" height="2.5" fill="#111"/>
<rect x="811.19" y="892" width="1.6" height="2.5" fill="#111"/>
<rect x="821.62" y="892" width="1.6" height="2.5" fill="#111"/>
<rect x="832.05" y="892" width="1.6" height="5" fill="#111"/>
<rect x="842.48" y="892" width="1.6" height="2.5" fill="#111"/>
<rect x="852.91" y="892" width="1.6" height="2.5" fill="#111"/>
<rect x="863.34" y="892" width="1.6" height="2.5" fill="#111"/>
<rect x="873.77" y="892" width="1.6" height="2.5" fill="#111"/>
<rect x="884.20" y="892" width="1.6" height="6.5" fill="#111"/>
<text x="885.00" y="908" font-family="Liberation Sans" font-size="12.3" text-anchor="middle" fill="#111">0</text>
<rect x="894.63" y="892" width="1.6" height="2.5" fill="#111"/>
<rect x="905.06" y="892" width="1.6" height="2.5" fill="#111"/>
<rect x="915.49" y="892" width="1.6" height="2.5" fill="#111"/>
<rect x="925.92" y="892" width="1.6" height="2.5" fill="#111"/>
<rect x="936.35" y="892" width="1.6" height="5" fill="#111"/>
<rect x="946.78" y="892" width="1.6" height="2.5" fill="#111"/>
<rect x="957.21" y="892" width="1.6" height="2.5" fill="#111"/>
<rect x="967.64" y="892" width="1.6" height="2.5" fill="#111"/>
<rect x="978.07" y="892" width="1.6" height="2.5" fill="#111"/>
<rect x="988.50" y="892" width="1.6" height="6.5" fill="#111"/>
<text x="989.30" y="908" font-family="Liberation Sans" font-size="12.3" text-anchor="middle" fill="#111">5</text>
<rect x="998.93" y="892" width="1.6" height="2.5" fill="#111"/>
<rect x="1009.36" y="892" width="1.6" height="2.5" fill="#111"/>
<rect x="1019.79" y="892" width="1.6" height="2.5" fill="#111"/>
<rect x="1030.22" y="892" width="1.6" height="2.5" fill="#111"/>
<rect x="1040.65" y="892" width="1.6" height="5" fill="#111"/>
<rect x="1051.08" y="892" width="1.6" height="2.5" fill="#111"/>
<rect x="1061.51" y="892" width="1.6" height="2.5" fill="#111"/>
<rect x="1071.94" y="892" width="1.6" height="2.5" fill="#111"/>
<rect x="1082.37" y="892" width="1.6" height="2.5" fill="#111"/>
<rect x="1092.80" y="892" width="1.6" height="6.5" fill="#111"/>
<text x="1093.60" y="908" font-family="Liberation Sans" font-size="12.3" text-anchor="middle" fill="#111">10</text>
<rect x="1103.23" y="892" width="1.6" height="2.5" fill="#111"/>
<rect x="1113.66" y="892" width="1.6" height="2.5" fill="#111"/>
<rect x="1124.09" y="892" width="1.6" height="2.5" fill="#111"/>
<rect x="1134.52" y="892" width="1.6" height="2.5" fill="#111"/>
<rect x="1144.95" y="892" width="1.6" height="5" fill="#111"/>
<rect x="1155.38" y="892" width="1.6" height="2.5" fill="#111"/>
<rect x="1165.81" y="892" width="1.6" height="2.5" fill="#111"/>
<rect x="1176.24" y="892" width="1.6" height="2.5" fill="#111"/>
<rect x="1186.67" y="892" width="1.6" height="2.5" fill="#111"/>
<rect x="1197.10" y="892" width="1.6" height="6.5" fill="#111"/>
<text x="1197.90" y="908" font-family="Liberation Sans" font-size="12.3" text-anchor="middle" fill="#111">15</text>
<rect x="1207.53" y="892" width="1.6" height="2.5" fill="#111"/>
<rect x="1217.96" y="892" width="1.6" height="2.5" fill="#111"/>
<rect x="1228.39" y="892" width="1.6" height="2.5" fill="#111"/>
<rect x="1238.82" y="892" width="1.6" height="2.5" fill="#111"/>
<rect x="1249.25" y="892" width="1.6" height="5" fill="#111"/>
<rect x="1259.68" y="892" width="1.6" height="2.5" fill="#111"/>
<rect x="1270.11" y="892" width="1.6" height="2.5" fill="#111"/>
<rect x="1280.54" y="892" width="1.6" height="2.5" fill="#111"/>
<rect x="1290.97" y="892" width="1.6" height="2.5" fill="#111"/>
<rect x="1301.40" y="892" width="1.6" height="6.5" fill="#111"/>
<text x="1302.20" y="908" font-family="Liberation Sans" font-size="12.3" text-anchor="middle" fill="#111">20</text>
<rect x="1311.83" y="892" width="1.6" height="2.5" fill="#111"/>
<rect x="1322.26" y="892" width="1.6" height="2.5" fill="#111"/>
<rect x="1332.69" y="892" width="1.6" height="2.5" fill="#111"/>
<rect x="1343.12" y="892" width="1.6" height="2.5" fill="#111"/>
<rect x="1353.55" y="892" width="1.6" height="5" fill="#111"/>
<rect x="1363.98" y="892" width="1.6" height="2.5" fill="#111"/>
<rect x="1374.41" y="892" width="1.6" height="2.5" fill="#111"/>
<rect x="1384.84" y="892" width="1.6" height="2.5" fill="#111"/>
<rect x="1395.27" y="892" width="1.6" height="2.5" fill="#111"/>
<rect x="1405.70" y="892" width="1.6" height="6.5" fill="#111"/>
<text x="1406.50" y="908" font-family="Liberation Sans" font-size="12.3" text-anchor="middle" fill="#111">25</text>
<rect x="1416.13" y="892" width="1.6" height="2.5" fill="#111"/>
<rect x="1426.56" y="892" width="1.6" height="2.5" fill="#111"/>
<rect x="1436.99" y="892" width="1.6" height="2.5" fill="#111"/>
<rect x="1447.42" y="892" width="1.6" height="2.5" fill="#111"/>
<rect x="1457.85" y="892" width="1.6" height="5" fill="#111"/>
<rect x="1468.28" y="892" width="1.6" height="2.5" fill="#111"/>
<rect x="1478.71" y="892" width="1.6" height="2.5" fill="#111"/>
<rect x="1489.14" y="892" width="1.6" height="2.5" fill="#111"/>
<rect x="1499.57" y="892" width="1.6" height="2.5" fill="#111"/>
<rect x="1510.00" y="892" width="1.6" height="6.5" fill="#111"/>
<text x="1510.80" y="908" font-family="Liberation Sans" font-size="12.3" text-anchor="middle" fill="#111">30</text>
<rect x="1520.43" y="892" width="1.6" height="2.5" fill="#111"/>
<rect x="1530.86" y="892" width="1.6" height="2.5" fill="#111"/>
<rect x="1541.29" y="892" width="1.6" height="2.5" fill="#111"/>
<rect x="1551.72" y="892" width="1.6" height="2.5" fill="#111"/>
<rect x="1562.15" y="892" width="1.6" height="5" fill="#111"/>
<rect x="1572.58" y="892" width="1.6" height="2.5" fill="#111"/>
<rect x="1583.01" y="892" width="1.6" height="2.5" fill="#111"/>
<rect x="1593.44" y="892" width="1.6" height="2.5" fill="#111"/>
<rect x="21.20" y="880.17" width="2.8" height="1.6" fill="#111"/>
<rect x="21.20" y="869.74" width="2.8" height="1.6" fill="#111"/>
<rect x="21.20" y="859.31" width="2.8" height="1.6" fill="#111"/>
<rect x="21.20" y="848.88" width="2.8" height="1.6" fill="#111"/>
<rect x="19.00" y="838.45" width="5" height="1.6" fill="#111"/>
<rect x="21.20" y="828.02" width="2.8" height="1.6" fill="#111"/>
<rect x="21.20" y="817.59" width="2.8" height="1.6" fill="#111"/>
<rect x="21.20" y="807.16" width="2.8" height="1.6" fill="#111"/>
<rect x="21.20" y="796.73" width="2.8" height="1.6" fill="#111"/>
<rect x="17.50" y="786.30" width="6.5" height="1.6" fill="#111"/>
<text x="0" y="0" transform="translate(15,787.10) rotate(-90)" font-family="Liberation Sans" font-size="12.3" text-anchor="middle" fill="#111">-15</text>
<rect x="21.20" y="775.87" width="2.8" height="1.6" fill="#111"/>
<rect x="21.20" y="765.44" width="2.8" height="1.6" fill="#111"/>
<rect x="21.20" y="755.01" width="2.8" height="1.6" fill="#111"/>
<rect x="21.20" y="744.58" width="2.8" height="1.6" fill="#111"/>
<rect x="19.00" y="734.15" width="5" height="1.6" fill="#111"/>
<rect x="21.20" y="723.72" width="2.8" height="1.6" fill="#111"/>
<rect x="21.20" y="713.29" width="2.8" height="1.6" fill="#111"/>
<rect x="21.20" y="702.86" width="2.8" height="1.6" fill="#111"/>
<rect x="21.20" y="692.43" width="2.8" height="1.6" fill="#111"/>
<rect x="17.50" y="682.00" width="6.5" height="1.6" fill="#111"/>
<text x="0" y="0" transform="translate(15,682.80) rotate(-90)" font-family="Liberation Sans" font-size="12.3" text-anchor="middle" fill="#111">-10</text>
<rect x="21.20" y="671.57" width="2.8" height="1.6" fill="#111"/>
<rect x="21.20" y="661.14" width="2.8" height="1.6" fill="#111"/>
<rect x="21.20" y="650.71" width="2.8" height="1.6" fill="#111"/>
<rect x="21.20" y="640.28" width="2.8" height="1.6" fill="#111"/>
<rect x="19.00" y="629.85" width="5" height="1.6" fill="#111"/>
<rect x="21.20" y="619.42" width="2.8" height="1.6" fill="#111"/>
<rect x="21.20" y="608.99" width="2.8" height="1.6" fill="#111"/>
<rect x="21.20" y="598.56" width="2.8" height="1.6" fill="#111"/>
<rect x="21.20" y="588.13" width="2.8" height="1.6" fill="#111"/>
<rect x="17.50" y="577.70" width="6.5" height="1.6" fill="#111"/>
<text x="0" y="0" transform="translate(15,578.50) rotate(-90)" font-family="Liberation Sans" font-size="12.3" text-anchor="middle" fill="#111">-5</text>
<rect x="21.20" y="567.27" width="2.8" height="1.6" fill="#111"/>
<rect x="21.20" y="556.84" width="2.8" height="1.6" fill="#111"/>
<rect x="21.20" y="546.41" width="2.8" height="1.6" fill="#111"/>
<rect x="21.20" y="535.98" width="2.8" height="1.6" fill="#111"/>
<rect x="19.00" y="525.55" width="5" height="1.6" fill="#111"/>
<rect x="21.20" y="515.12" width="2.8" height="1.6" fill="#111"/>
<rect x="21.20" y="504.69" width="2.8" height="1.6" fill="#111"/>
<rect x="21.20" y="494.26" width="2.8" height="1.6" fill="#111"/>
<rect x="21.20" y="483.83" width="2.8" height="1.6" fill="#111"/>
<rect x="17.50" y="473.40" width="6.5" height="1.6" fill="#111"/>
<text x="0" y="0" transform="translate(15,474.20) rotate(-90)" font-family="Liberation Sans" font-size="12.3" text-anchor="middle" fill="#111">0</text>
<rect x="21.20" y="462.97" width="2.8" height="1.6" fill="#111"/>
<rect x="21.20" y="452.54" width="2.8" height="1.6" fill="#111"/>
<rect x="21.20" y="442.11" width="2.8" height="1.6" fill="#111"/>
<rect x="21.20" y="431.68" width="2.8" height="1.6" fill="#111"/>
<rect x="19.00" y="421.25" width="5" height="1.6" fill="#111"/>
<rect x="21.20" y="410.82" width="2.8" height="1.6" fill="#111"/>
<rect x="21.20" y="400.39" width="2.8" height="1.6" fill="#111"/>
<rect x="21.20" y="389.96" width="2.8" height="1.6" fill="#111"/>
<rect x="21.20" y="379.53" width="2.8" height="1.6" fill="#111"/>
<rect x="17.50" y="369.10" width="6.5" height="1.6" fill="#111"/>
<text x="0" y="0" transform="translate(15,369.90) rotate(-90)" font-family="Liberation Sans" font-size="12.3" text-anchor="middle" fill="#111">5</text>
<rect x="21.20" y="358.67" width="2.8" height="1.6" fill="#111"/>
<rect x="21.20" y="348.24" width="2.8" height="1.6" fill="#111"/>
<rect x="21.20" y="337.81" width="2.8" height="1.6" fill="#111"/>
<rect x="21.20" y="327.38" width="2.8" height="1.6" fill="#111"/>
<rect x="19.00" y="316.95" width="5" height="1.6" fill="#111"/>
<rect x="21.20" y="306.52" width="2.8" height="1.6" fill="#111"/>
<rect x="21.20" y="296.09" width="2.8" height="1.6" fill="#111"/>
<rect x="21.20" y="285.66" width="2.8" height="1.6" fill="#111"/>
<rect x="21.20" y="275.23" width="2.8" height="1.6" fill="#111"/>
<rect x="17.50" y="264.80" width="6.5" height="1.6" fill="#111"/>
<text x="0" y="0" transform="translate(15,265.60) rotate(-90)" font-family="Liberation Sans" font-size="12.3" text-anchor="middle" fill="#111">10</text>
<rect x="21.20" y="254.37" width="2.8" height="1.6" fill="#111"/>
<rect x="21.20" y="243.94" width="2.8" height="1.6" fill="#111"/>
<rect x="21.20" y="233.51" width="2.8" height="1.6" fill="#111"/>
<rect x="21.20" y="223.08" width="2.8" height="1.6" fill="#111"/>
<rect x="19.00" y="212.65" width="5" height="1.6" fill="#111"/>
<rect x="21.20" y="202.22" width="2.8" height="1.6" fill="#111"/>
<rect x="21.20" y="191.79" width="2.8" height="1.6" fill="#111"/>
<rect x="21.20" y="181.36" width="2.8" height="1.6" fill="#111"/>
<rect x="21.20" y="170.93" width="2.8" height="1.6" fill="#111"/>
<rect x="17.50" y="160.50" width="6.5" height="1.6" fill="#111"/>
<text x="0" y="0" transform="translate(15,161.30) rotate(-90)" font-family="Liberation Sans" font-size="12.3" text-anchor="middle" fill="#111">15</text>
<rect x="21.20" y="150.07" width="2.8" height="1.6" fill="#111"/>
<rect x="21.20" y="139.64" width="2.8" height="1.6" fill="#111"/>
<rect x="21.20" y="129.21" width="2.8" height="1.6" fill="#111"/>
<rect x="21.20" y="118.78" width="2.8" height="1.6" fill="#111"/>
<rect x="19.00" y="108.35" width="5" height="1.6" fill="#111"/>
</svg>
<svg class="a" style="left:268px;top:148px" width="14" height="22" viewBox="0 0 14 22"><path d="M1 1 L1 17 L4.5 13.5 L7.5 20 L9.5 19 L6.8 12.6 L11.5 12.6 Z" fill="#fff" stroke="#111" stroke-width="1" stroke-linejoin="round"/></svg>
<svg class="a" style="left:426px;top:145px" width="787" height="712" viewBox="426 145 787 712">
<defs><filter id="cf" x="286" y="5" width="1067" height="992" filterUnits="userSpaceOnUse" color-interpolation-filters="sRGB">
<feGaussianBlur in="SourceGraphic" stdDeviation="20" result="b1"/>
<feGaussianBlur in="SourceGraphic" stdDeviation="34" result="b2"/>
<feGaussianBlur in="SourceGraphic" stdDeviation="50" result="b3"/>
<feColorMatrix in="b1" type="matrix" values="0.3303 0.6607 0 0 0 0.3303 0.6607 0 0 0 0.3303 0.6607 0 0 0 0 0 0 0 1" result="m1"/>
<feColorMatrix in="b2" type="matrix" values="1.3857 1.2597 0 0 0 1.3857 1.2597 0 0 0 1.3857 1.2597 0 0 0 0 0 0 0 1" result="m2"/>
<feColorMatrix in="b3" type="matrix" values="0.9510 0.0000 0 0 0 0.9510 0.0000 0 0 0 0.9510 0.0000 0 0 0 0 0 0 0 1" result="m3"/>
<feComposite in="m1" in2="m2" operator="arithmetic" k1="0" k2="1" k3="1" k4="0" result="c0"/>
<feComposite in="c0" in2="m3" operator="arithmetic" k1="0" k2="1" k3="1" k4="0" result="c"/>
<feComponentTransfer in="c"><feFuncR type="table" tableValues="0.000 0.000 0.000 0.000 0.000 0.000 0.000 0.000 0.000 0.000 0.000 0.000 0.000 0.000 0.000 0.000 0.000 0.000 0.000 0.000 0.000 0.000 0.000 0.000 0.000 0.000 0.000 0.000 0.000 0.000 0.000 0.000 0.000 0.000 0.000 0.000 0.000 0.000 0.000 0.000 0.000 0.000 0.000 0.000 0.000 0.000 0.000 0.000 0.000 0.000 0.000 0.000 0.000 0.000 0.000 0.000 0.000 0.000 0.000 0.000 0.000 0.000 0.000 0.000 0.000 0.006 0.023 0.039 0.055 0.071 0.087 0.103 0.119 0.136 0.152 0.168 0.184 0.200 0.216 0.233 0.249 0.265 0.293 0.341 0.388 0.436 0.483 0.531 0.578 0.625 0.673 0.720 0.768 0.815 0.862 0.910 0.957 1.000 1.000 1.000 1.000 1.000 1.000 1.000 1.000 1.000 1.000 1.000 1.000 1.000 1.000 1.000 1.000 1.000 1.000 1.000 1.000 1.000 1.000 1.000 1.000 1.000 1.000 1.000 1.000 1.000 1.000 1.000 1.000 1.000 1.000 1.000 1.000 1.000 1.000 1.000 1.000 1.000 1.000 1.000 1.000 1.000 1.000 1.000 1.000 1.000 1.000 1.000 1.000 1.000 1.000 1.000 1.000 1.000 1.000 1.000 1.000 1.000 1.000 1.000 1.000 1.000 1.000 1.000 1.000 1.000 1.000 1.000 1.000 1.000 1.000 1.000 1.000 1.000 1.000 1.000 1.000 1.000 1.000 1.000 1.000 1.000 1.000 1.000 1.000 1.000 1.000 1.000 1.000 1.000 1.000 1.000 1.000 1.000 1.000 1.000 1.000 1.000 1.000 1.000 1.000 1.000 1.000 1.000 1.000 1.000 1.000 1.000 1.000 1.000 1.000 1.000 1.000 1.000 1.000 1.000 1.000 1.000 1.000 1.000 1.000 1.000 1.000 1.000 1.000 1.000 1.000 1.000 1.000 1.000 1.000 1.000 1.000 1.000 1.000 1.000 1.000 1.000 1.000 1.000 1.000 1.000 1.000 1.000 1.000 1.000 1.000 1.000 1.000 1.000 1.000 1.000 1.000 1.000 1.000 1.000"/><feFuncG type="table" tableValues="0.000 0.000 0.000 0.000 0.000 0.000 0.037 0.078 0.119 0.160 0.201 0.242 0.283 0.322 0.356 0.390 0.424 0.458 0.491 0.525 0.559 0.593 0.627 0.661 0.694 0.728 0.759 0.788 0.816 0.845 0.874 0.902 0.931 0.959 0.988 0.999 0.998 0.997 0.996 0.995 0.993 0.992 0.991 0.990 0.989 0.987 0.986 0.985 0.984 0.983 0.982 0.980 0.975 0.970 0.965 0.960 0.954 0.949 0.944 0.939 0.934 0.928 0.923 0.918 0.913 0.910 0.912 0.913 0.915 0.916 0.917 0.919 0.920 0.921 0.923 0.924 0.926 0.927 0.928 0.930 0.931 0.933 0.935 0.939 0.944 0.948 0.953 0.957 0.961 0.966 0.970 0.974 0.979 0.983 0.987 0.992 0.996 0.997 0.972 0.947 0.922 0.896 0.871 0.846 0.821 0.795 0.770 0.745 0.720 0.694 0.669 0.644 0.618 0.593 0.568 0.541 0.507 0.473 0.439 0.405 0.371 0.338 0.304 0.270 0.236 0.202 0.168 0.135 0.117 0.116 0.115 0.114 0.113 0.113 0.112 0.111 0.110 0.109 0.108 0.107 0.106 0.105 0.104 0.103 0.102 0.101 0.101 0.100 0.099 0.098 0.097 0.096 0.095 0.094 0.093 0.092 0.091 0.090 0.090 0.089 0.088 0.087 0.086 0.085 0.084 0.083 0.082 0.081 0.080 0.079 0.078 0.078 0.077 0.076 0.075 0.074 0.073 0.072 0.071 0.070 0.069 0.068 0.067 0.066 0.066 0.065 0.064 0.063 0.062 0.061 0.060 0.059 0.058 0.057 0.056 0.055 0.054 0.054 0.053 0.052 0.051 0.050 0.049 0.048 0.047 0.046 0.045 0.044 0.043 0.042 0.042 0.041 0.040 0.039 0.038 0.037 0.036 0.035 0.034 0.033 0.032 0.031 0.030 0.030 0.029 0.028 0.027 0.026 0.025 0.024 0.023 0.022 0.021 0.020 0.019 0.018 0.018 0.017 0.016 0.015 0.014 0.013 0.012 0.011 0.010 0.009 0.008 0.007 0.006 0.006 0.005 0.004 0.003 0.002 0.001 0.000"/><feFuncB type="table" tableValues="0.980 0.980 0.980 0.980 0.980 0.980 0.983 0.985 0.988 0.990 0.993 0.996 0.998 1.000 1.000 1.000 1.000 1.000 1.000 1.000 1.000 1.000 1.000 1.000 1.000 1.000 1.000 1.000 1.000 1.000 1.000 1.000 1.000 1.000 1.000 0.983 0.953 0.924 0.894 0.865 0.835 0.806 0.776 0.746 0.717 0.687 0.658 0.628 0.599 0.569 0.539 0.510 0.472 0.435 0.397 0.360 0.322 0.285 0.247 0.210 0.172 0.135 0.097 0.060 0.022 0.000 0.000 0.000 0.000 0.000 0.000 0.000 0.000 0.000 0.000 0.000 0.000 0.000 0.000 0.000 0.000 0.000 0.000 0.000 0.000 0.000 0.000 0.000 0.000 0.000 0.000 0.000 0.000 0.000 0.000 0.000 0.000 0.000 0.000 0.000 0.000 0.000 0.000 0.000 0.000 0.000 0.000 0.000 0.000 0.000 0.000 0.000 0.000 0.000 0.000 0.000 0.000 0.000 0.000 0.000 0.000 0.000 0.000 0.000 0.000 0.000 0.000 0.000 0.000 0.000 0.000 0.000 0.000 0.000 0.000 0.000 0.000 0.000 0.000 0.000 0.000 0.000 0.000 0.000 0.000 0.000 0.000 0.000 0.000 0.000 0.000 0.000 0.000 0.000 0.000 0.000 0.000 0.000 0.000 0.000 0.000 0.000 0.000 0.000 0.000 0.000 0.000 0.000 0.000 0.000 0.000 0.000 0.000 0.000 0.000 0.000 0.000 0.000 0.000 0.000 0.000 0.000 0.000 0.000 0.000 0.000 0.000 0.000 0.000 0.000 0.000 0.000 0.000 0.000 0.000 0.000 0.000 0.000 0.000 0.000 0.000 0.000 0.000 0.000 0.000 0.000 0.000 0.000 0.000 0.000 0.000 0.000 0.000 0.000 0.000 0.000 0.000 0.000 0.000 0.000 0.000 0.000 0.000 0.000 0.000 0.000 0.000 0.000 0.000 0.000 0.000 0.000 0.000 0.000 0.000 0.000 0.000 0.000 0.000 0.000 0.000 0.000 0.000 0.000 0.000 0.000 0.000 0.000 0.000 0.000 0.000 0.000 0.000 0.000 0.000 0.000"/><feFuncA type="linear" slope="0" intercept="1"/></feComponentTransfer>
</filter></defs>
<g filter="url(#cf)"><rect x="286" y="5" width="1067" height="992" fill="#000"/>
<rect x="459" y="183" width="68" height="55" fill="rgb(55,0,0)"/>
<rect x="589" y="180" width="54" height="59" fill="rgb(54,0,0)"/>
<rect x="733" y="180" width="54" height="59" fill="rgb(54,0,0)"/>
<rect x="862" y="180" width="54" height="59" fill="rgb(54,0,0)"/>
<rect x="989" y="178.5" width="54" height="59.5" fill="rgb(52,0,0)"/>
<rect x="1120" y="178.5" width="54" height="59.5" fill="rgb(64,0,0)"/>
<rect x="459" y="289" width="68" height="55" fill="rgb(56,0,0)"/>
<rect x="580" y="287.5" width="63" height="54.0" fill="rgb(71,0,0)"/>
<rect x="733" y="287.5" width="63" height="54.0" fill="rgb(77,0,0)"/>
<rect x="859" y="287.5" width="63" height="54.0" fill="rgb(76,0,0)"/>
<rect x="1117" y="287.5" width="62" height="54.0" fill="rgb(69,0,0)"/>
<rect x="459" y="454" width="68" height="54.5" fill="rgb(55,0,0)"/>
<rect x="589" y="431" width="54" height="59" fill="rgb(53,0,0)"/>
<rect x="733" y="431" width="54" height="59" fill="rgb(53,0,0)"/>
<rect x="857.5" y="443.5" width="54.5" height="63.0" fill="rgb(63,0,0)"/>
<rect x="989" y="443.5" width="54" height="63.0" fill="rgb(58,0,0)"/>
<rect x="1120" y="443.5" width="54" height="63.0" fill="rgb(56,0,0)"/>
<rect x="459" y="594" width="68" height="53.5" fill="rgb(0,55,0)"/>
<rect x="589" y="591" width="54" height="54.5" fill="rgb(0,59,0)"/>
<rect x="733" y="591" width="54" height="54.5" fill="rgb(0,59,0)"/>
<rect x="861" y="591" width="55" height="54.5" fill="rgb(0,71,0)"/>
<rect x="989" y="591" width="54" height="54.5" fill="rgb(0,71,0)"/>
<rect x="1120" y="591" width="54" height="54.5" fill="rgb(0,52,0)"/>
<rect x="461.5" y="771.5" width="63.0" height="52.5" fill="rgb(0,55,0)"/>
<rect x="593" y="771.5" width="49" height="47.0" fill="rgb(0,75,0)"/>
<rect x="735" y="771.5" width="48" height="47.0" fill="rgb(0,76,0)"/>
<rect x="862.5" y="771.5" width="49.5" height="47.0" fill="rgb(0,74,0)"/>
<rect x="992" y="771.5" width="49" height="47.0" fill="rgb(0,74,0)"/>
<rect x="1123" y="771.5" width="49" height="47.0" fill="rgb(0,56,0)"/>
</g>
<rect x="426.75" y="145.75" width="785.5" height="710.5" fill="none" stroke="#00007a" stroke-width="1.5" opacity="0.55"/>
<rect x="426.5" y="145.5" width="786" height="711" fill="none" stroke="#fff" stroke-width="1.2" stroke-dasharray="3 9" opacity="0.6"/>
</svg>
<svg class="a" style="left:0;top:0" width="1917" height="991">
<rect x="459" y="183" width="68" height="55" fill="none" stroke="#0b2a6c" stroke-width="2.7"/>
<rect x="589" y="180" width="54" height="59" fill="none" stroke="#0b2a6c" stroke-width="2.7"/>
<rect x="733" y="180" width="54" height="59" fill="none" stroke="#0b2a6c" stroke-width="2.7"/>
<rect x="862" y="180" width="54" height="59" fill="none" stroke="#0b2a6c" stroke-width="2.7"/>
<rect x="989" y="178.5" width="54" height="59.5" fill="none" stroke="#0b2a6c" stroke-width="2.7"/>
<rect x="1120" y="178.5" width="54" height="59.5" fill="none" stroke="#0b2a6c" stroke-width="2.7"/>
<rect x="459" y="289" width="68" height="55" fill="none" stroke="#0b2a6c" stroke-width="2.7"/>
<rect x="580" y="287.5" width="63" height="54.0" fill="none" stroke="#0b2a6c" stroke-width="2.7"/>
<rect x="733" y="287.5" width="63" height="54.0" fill="none" stroke="#0b2a6c" stroke-width="2.7"/>
<rect x="859" y="287.5" width="63" height="54.0" fill="none" stroke="#0b2a6c" stroke-width="2.7"/>
<rect x="986.5" y="287.5" width="59.5" height="54.0" fill="none" stroke="#0b2a6c" stroke-width="2.7"/>
<rect x="1117" y="287.5" width="62" height="54.0" fill="none" stroke="#0b2a6c" stroke-width="2.7"/>
<rect x="459" y="454" width="68" height="54.5" fill="none" stroke="#0b2a6c" stroke-width="2.7"/>
<rect x="589" y="431" width="54" height="59" fill="none" stroke="#0b2a6c" stroke-width="2.7"/>
<rect x="733" y="431" width="54" height="59" fill="none" stroke="#0b2a6c" stroke-width="2.7"/>
<rect x="857.5" y="443.5" width="54.5" height="63.0" fill="none" stroke="#0b2a6c" stroke-width="2.7"/>
<rect x="989" y="443.5" width="54" height="63.0" fill="none" stroke="#0b2a6c" stroke-width="2.7"/>
<rect x="1120" y="443.5" width="54" height="63.0" fill="none" stroke="#0b2a6c" stroke-width="2.7"/>
<rect x="459" y="594" width="68" height="53.5" fill="none" stroke="#0b2a6c" stroke-width="2.7"/>
<rect x="589" y="591" width="54" height="54.5" fill="none" stroke="#0b2a6c" stroke-width="2.7"/>
<rect x="733" y="591" width="54" height="54.5" fill="none" stroke="#0b2a6c" stroke-width="2.7"/>
<rect x="861" y="591" width="55" height="54.5" fill="none" stroke="#0b2a6c" stroke-width="2.7"/>
<rect x="989" y="591" width="54" height="54.5" fill="none" stroke="#0b2a6c" stroke-width="2.7"/>
<rect x="1120" y="591" width="54" height="54.5" fill="none" stroke="#0b2a6c" stroke-width="2.7"/>
<rect x="461.5" y="771.5" width="63.0" height="52.5" fill="none" stroke="#0b2a6c" stroke-width="2.7"/>
<rect x="593" y="771.5" width="49" height="47.0" fill="none" stroke="#0b2a6c" stroke-width="2.7"/>
<rect x="735" y="771.5" width="48" height="47.0" fill="none" stroke="#0b2a6c" stroke-width="2.7"/>
<rect x="862.5" y="771.5" width="49.5" height="47.0" fill="none" stroke="#0b2a6c" stroke-width="2.7"/>
<rect x="992" y="771.5" width="49" height="47.0" fill="none" stroke="#0b2a6c" stroke-width="2.7"/>
<rect x="1123" y="771.5" width="49" height="47.0" fill="none" stroke="#0b2a6c" stroke-width="2.7"/>
<rect x="456.2" y="180.2" width="5.6" height="5.6" rx="1" fill="#fff" stroke="#333" stroke-width="0.7"/>
<rect x="524.2" y="180.2" width="5.6" height="5.6" rx="1" fill="#fff" stroke="#333" stroke-width="0.7"/>
<rect x="456.2" y="235.2" width="5.6" height="5.6" rx="1" fill="#fff" stroke="#333" stroke-width="0.7"/>
<rect x="524.2" y="235.2" width="5.6" height="5.6" rx="1" fill="#fff" stroke="#333" stroke-width="0.7"/>
<circle cx="492" cy="209.5" r="5.3" fill="#f9c21e" stroke="#7a5800" stroke-width="1"/>
<rect x="586.2" y="177.2" width="5.6" height="5.6" rx="1" fill="#fff" stroke="#333" stroke-width="0.7"/>
<rect x="640.2" y="177.2" width="5.6" height="5.6" rx="1" fill="#fff" stroke="#333" stroke-width="0.7"/>
<rect x="586.2" y="236.2" width="5.6" height="5.6" rx="1" fill="#fff" stroke="#333" stroke-width="0.7"/>
<rect x="640.2" y="236.2" width="5.6" height="5.6" rx="1" fill="#fff" stroke="#333" stroke-width="0.7"/>
<circle cx="616" cy="209.5" r="5.3" fill="#f9c21e" stroke="#7a5800" stroke-width="1"/>
<rect x="730.2" y="177.2" width="5.6" height="5.6" rx="1" fill="#fff" stroke="#333" stroke-width="0.7"/>
<rect x="784.2" y="177.2" width="5.6" height="5.6" rx="1" fill="#fff" stroke="#333" stroke-width="0.7"/>
<rect x="730.2" y="236.2" width="5.6" height="5.6" rx="1" fill="#fff" stroke="#333" stroke-width="0.7"/>
<rect x="784.2" y="236.2" width="5.6" height="5.6" rx="1" fill="#fff" stroke="#333" stroke-width="0.7"/>
<circle cx="759.5" cy="209.5" r="5.3" fill="#f9c21e" stroke="#7a5800" stroke-width="1"/>
<rect x="859.2" y="177.2" width="5.6" height="5.6" rx="1" fill="#fff" stroke="#333" stroke-width="0.7"/>
<rect x="913.2" y="177.2" width="5.6" height="5.6" rx="1" fill="#fff" stroke="#333" stroke-width="0.7"/>
<rect x="859.2" y="236.2" width="5.6" height="5.6" rx="1" fill="#fff" stroke="#333" stroke-width="0.7"/>
<rect x="913.2" y="236.2" width="5.6" height="5.6" rx="1" fill="#fff" stroke="#333" stroke-width="0.7"/>
<circle cx="887" cy="209.5" r="5.3" fill="#f9c21e" stroke="#7a5800" stroke-width="1"/>
<rect x="986.2" y="175.7" width="5.6" height="5.6" rx="1" fill="#fff" stroke="#333" stroke-width="0.7"/>
<rect x="1040.2" y="175.7" width="5.6" height="5.6" rx="1" fill="#fff" stroke="#333" stroke-width="0.7"/>
<rect x="986.2" y="235.2" width="5.6" height="5.6" rx="1" fill="#fff" stroke="#333" stroke-width="0.7"/>
<rect x="1040.2" y="235.2" width="5.6" height="5.6" rx="1" fill="#fff" stroke="#333" stroke-width="0.7"/>
<circle cx="1016" cy="207" r="5.3" fill="#f9c21e" stroke="#7a5800" stroke-width="1"/>
<rect x="1117.2" y="175.7" width="5.6" height="5.6" rx="1" fill="#fff" stroke="#333" stroke-width="0.7"/>
<rect x="1171.2" y="175.7" width="5.6" height="5.6" rx="1" fill="#fff" stroke="#333" stroke-width="0.7"/>
<rect x="1117.2" y="235.2" width="5.6" height="5.6" rx="1" fill="#fff" stroke="#333" stroke-width="0.7"/>
<rect x="1171.2" y="235.2" width="5.6" height="5.6" rx="1" fill="#fff" stroke="#333" stroke-width="0.7"/>
<circle cx="1147" cy="207" r="5.3" fill="#f9c21e" stroke="#7a5800" stroke-width="1"/>
<rect x="456.2" y="286.2" width="5.6" height="5.6" rx="1" fill="#fff" stroke="#333" stroke-width="0.7"/>
<rect x="524.2" y="286.2" width="5.6" height="5.6" rx="1" fill="#fff" stroke="#333" stroke-width="0.7"/>
<rect x="456.2" y="341.2" width="5.6" height="5.6" rx="1" fill="#fff" stroke="#333" stroke-width="0.7"/>
<rect x="524.2" y="341.2" width="5.6" height="5.6" rx="1" fill="#fff" stroke="#333" stroke-width="0.7"/>
<circle cx="492" cy="315.5" r="5.3" fill="#f9c21e" stroke="#7a5800" stroke-width="1"/>
<rect x="577.2" y="284.7" width="5.6" height="5.6" rx="1" fill="#fff" stroke="#333" stroke-width="0.7"/>
<rect x="640.2" y="284.7" width="5.6" height="5.6" rx="1" fill="#fff" stroke="#333" stroke-width="0.7"/>
<rect x="577.2" y="338.7" width="5.6" height="5.6" rx="1" fill="#fff" stroke="#333" stroke-width="0.7"/>
<rect x="640.2" y="338.7" width="5.6" height="5.6" rx="1" fill="#fff" stroke="#333" stroke-width="0.7"/>
<circle cx="611" cy="313.5" r="5.3" fill="#f9c21e" stroke="#7a5800" stroke-width="1"/>
<rect x="730.2" y="284.7" width="5.6" height="5.6" rx="1" fill="#fff" stroke="#333" stroke-width="0.7"/>
<rect x="793.2" y="284.7" width="5.6" height="5.6" rx="1" fill="#fff" stroke="#333" stroke-width="0.7"/>
<rect x="730.2" y="338.7" width="5.6" height="5.6" rx="1" fill="#fff" stroke="#333" stroke-width="0.7"/>
<rect x="793.2" y="338.7" width="5.6" height="5.6" rx="1" fill="#fff" stroke="#333" stroke-width="0.7"/>
<circle cx="762.5" cy="313.5" r="5.3" fill="#f9c21e" stroke="#7a5800" stroke-width="1"/>
<rect x="856.2" y="284.7" width="5.6" height="5.6" rx="1" fill="#fff" stroke="#333" stroke-width="0.7"/>
<rect x="919.2" y="284.7" width="5.6" height="5.6" rx="1" fill="#fff" stroke="#333" stroke-width="0.7"/>
<rect x="856.2" y="338.7" width="5.6" height="5.6" rx="1" fill="#fff" stroke="#333" stroke-width="0.7"/>
<rect x="919.2" y="338.7" width="5.6" height="5.6" rx="1" fill="#fff" stroke="#333" stroke-width="0.7"/>
<circle cx="890" cy="313.5" r="5.3" fill="#f9c21e" stroke="#7a5800" stroke-width="1"/>
<rect x="983.7" y="284.7" width="5.6" height="5.6" rx="1" fill="#fff" stroke="#333" stroke-width="0.7"/>
<rect x="1043.2" y="284.7" width="5.6" height="5.6" rx="1" fill="#fff" stroke="#333" stroke-width="0.7"/>
<rect x="983.7" y="338.7" width="5.6" height="5.6" rx="1" fill="#fff" stroke="#333" stroke-width="0.7"/>
<rect x="1043.2" y="338.7" width="5.6" height="5.6" rx="1" fill="#fff" stroke="#333" stroke-width="0.7"/>
<circle cx="1016" cy="313.5" r="5.3" fill="#f9c21e" stroke="#7a5800" stroke-width="1"/>
<rect x="1114.2" y="284.7" width="5.6" height="5.6" rx="1" fill="#fff" stroke="#333" stroke-width="0.7"/>
<rect x="1176.2" y="284.7" width="5.6" height="5.6" rx="1" fill="#fff" stroke="#333" stroke-width="0.7"/>
<rect x="1114.2" y="338.7" width="5.6" height="5.6" rx="1" fill="#fff" stroke="#333" stroke-width="0.7"/>
<rect x="1176.2" y="338.7" width="5.6" height="5.6" rx="1" fill="#fff" stroke="#333" stroke-width="0.7"/>
<circle cx="1147" cy="313.5" r="5.3" fill="#f9c21e" stroke="#7a5800" stroke-width="1"/>
<rect x="456.2" y="451.2" width="5.6" height="5.6" rx="1" fill="#fff" stroke="#333" stroke-width="0.7"/>
<rect x="524.2" y="451.2" width="5.6" height="5.6" rx="1" fill="#fff" stroke="#333" stroke-width="0.7"/>
<rect x="456.2" y="505.7" width="5.6" height="5.6" rx="1" fill="#fff" stroke="#333" stroke-width="0.7"/>
<rect x="524.2" y="505.7" width="5.6" height="5.6" rx="1" fill="#fff" stroke="#333" stroke-width="0.7"/>
<circle cx="492" cy="480.5" r="5.3" fill="#f9c21e" stroke="#7a5800" stroke-width="1"/>
<rect x="586.2" y="428.2" width="5.6" height="5.6" rx="1" fill="#fff" stroke="#333" stroke-width="0.7"/>
<rect x="640.2" y="428.2" width="5.6" height="5.6" rx="1" fill="#fff" stroke="#333" stroke-width="0.7"/>
<rect x="586.2" y="487.2" width="5.6" height="5.6" rx="1" fill="#fff" stroke="#333" stroke-width="0.7"/>
<rect x="640.2" y="487.2" width="5.6" height="5.6" rx="1" fill="#fff" stroke="#333" stroke-width="0.7"/>
<circle cx="615.5" cy="459" r="5.3" fill="#f9c21e" stroke="#7a5800" stroke-width="1"/>
<rect x="730.2" y="428.2" width="5.6" height="5.6" rx="1" fill="#fff" stroke="#333" stroke-width="0.7"/>
<rect x="784.2" y="428.2" width="5.6" height="5.6" rx="1" fill="#fff" stroke="#333" stroke-width="0.7"/>
<rect x="730.2" y="487.2" width="5.6" height="5.6" rx="1" fill="#fff" stroke="#333" stroke-width="0.7"/>
<rect x="784.2" y="487.2" width="5.6" height="5.6" rx="1" fill="#fff" stroke="#333" stroke-width="0.7"/>
<circle cx="759.5" cy="459" r="5.3" fill="#f9c21e" stroke="#7a5800" stroke-width="1"/>
<rect x="854.7" y="440.7" width="5.6" height="5.6" rx="1" fill="#fff" stroke="#333" stroke-width="0.7"/>
<rect x="909.2" y="440.7" width="5.6" height="5.6" rx="1" fill="#fff" stroke="#333" stroke-width="0.7"/>
<rect x="854.7" y="503.7" width="5.6" height="5.6" rx="1" fill="#fff" stroke="#333" stroke-width="0.7"/>
<rect x="909.2" y="503.7" width="5.6" height="5.6" rx="1" fill="#fff" stroke="#333" stroke-width="0.7"/>
<circle cx="884.5" cy="475" r="5.3" fill="#f9c21e" stroke="#7a5800" stroke-width="1"/>
<rect x="986.2" y="440.7" width="5.6" height="5.6" rx="1" fill="#fff" stroke="#333" stroke-width="0.7"/>
<rect x="1040.2" y="440.7" width="5.6" height="5.6" rx="1" fill="#fff" stroke="#333" stroke-width="0.7"/>
<rect x="986.2" y="503.7" width="5.6" height="5.6" rx="1" fill="#fff" stroke="#333" stroke-width="0.7"/>
<rect x="1040.2" y="503.7" width="5.6" height="5.6" rx="1" fill="#fff" stroke="#333" stroke-width="0.7"/>
<circle cx="1015.5" cy="474.5" r="5.3" fill="#f9c21e" stroke="#7a5800" stroke-width="1"/>
<rect x="1117.2" y="440.7" width="5.6" height="5.6" rx="1" fill="#fff" stroke="#333" stroke-width="0.7"/>
<rect x="1171.2" y="440.7" width="5.6" height="5.6" rx="1" fill="#fff" stroke="#333" stroke-width="0.7"/>
<rect x="1117.2" y="503.7" width="5.6" height="5.6" rx="1" fill="#fff" stroke="#333" stroke-width="0.7"/>
<rect x="1171.2" y="503.7" width="5.6" height="5.6" rx="1" fill="#fff" stroke="#333" stroke-width="0.7"/>
<circle cx="1146.5" cy="474.5" r="5.3" fill="#f9c21e" stroke="#7a5800" stroke-width="1"/>
<rect x="456.2" y="591.2" width="5.6" height="5.6" rx="1" fill="#fff" stroke="#333" stroke-width="0.7"/>
<rect x="524.2" y="591.2" width="5.6" height="5.6" rx="1" fill="#fff" stroke="#333" stroke-width="0.7"/>
<rect x="456.2" y="644.7" width="5.6" height="5.6" rx="1" fill="#fff" stroke="#333" stroke-width="0.7"/>
<rect x="524.2" y="644.7" width="5.6" height="5.6" rx="1" fill="#fff" stroke="#333" stroke-width="0.7"/>
<circle cx="492" cy="620" r="5.3" fill="#f9c21e" stroke="#7a5800" stroke-width="1"/>
<rect x="586.2" y="588.2" width="5.6" height="5.6" rx="1" fill="#fff" stroke="#333" stroke-width="0.7"/>
<rect x="640.2" y="588.2" width="5.6" height="5.6" rx="1" fill="#fff" stroke="#333" stroke-width="0.7"/>
<rect x="586.2" y="642.7" width="5.6" height="5.6" rx="1" fill="#fff" stroke="#333" stroke-width="0.7"/>
<rect x="640.2" y="642.7" width="5.6" height="5.6" rx="1" fill="#fff" stroke="#333" stroke-width="0.7"/>
<circle cx="615.5" cy="618" r="5.3" fill="#f9c21e" stroke="#7a5800" stroke-width="1"/>
<rect x="730.2" y="588.2" width="5.6" height="5.6" rx="1" fill="#fff" stroke="#333" stroke-width="0.7"/>
<rect x="784.2" y="588.2" width="5.6" height="5.6" rx="1" fill="#fff" stroke="#333" stroke-width="0.7"/>
<rect x="730.2" y="642.7" width="5.6" height="5.6" rx="1" fill="#fff" stroke="#333" stroke-width="0.7"/>
<rect x="784.2" y="642.7" width="5.6" height="5.6" rx="1" fill="#fff" stroke="#333" stroke-width="0.7"/>
<circle cx="759.5" cy="618" r="5.3" fill="#f9c21e" stroke="#7a5800" stroke-width="1"/>
<rect x="858.2" y="588.2" width="5.6" height="5.6" rx="1" fill="#fff" stroke="#333" stroke-width="0.7"/>
<rect x="913.2" y="588.2" width="5.6" height="5.6" rx="1" fill="#fff" stroke="#333" stroke-width="0.7"/>
<rect x="858.2" y="642.7" width="5.6" height="5.6" rx="1" fill="#fff" stroke="#333" stroke-width="0.7"/>
<rect x="913.2" y="642.7" width="5.6" height="5.6" rx="1" fill="#fff" stroke="#333" stroke-width="0.7"/>
<circle cx="887.5" cy="618" r="5.3" fill="#f9c21e" stroke="#7a5800" stroke-width="1"/>
<rect x="986.2" y="588.2" width="5.6" height="5.6" rx="1" fill="#fff" stroke="#333" stroke-width="0.7"/>
<rect x="1040.2" y="588.2" width="5.6" height="5.6" rx="1" fill="#fff" stroke="#333" stroke-width="0.7"/>
<rect x="986.2" y="642.7" width="5.6" height="5.6" rx="1" fill="#fff" stroke="#333" stroke-width="0.7"/>
<rect x="1040.2" y="642.7" width="5.6" height="5.6" rx="1" fill="#fff" stroke="#333" stroke-width="0.7"/>
<circle cx="1014.5" cy="618" r="5.3" fill="#f9c21e" stroke="#7a5800" stroke-width="1"/>
<rect x="1117.2" y="588.2" width="5.6" height="5.6" rx="1" fill="#fff" stroke="#333" stroke-width="0.7"/>
<rect x="1171.2" y="588.2" width="5.6" height="5.6" rx="1" fill="#fff" stroke="#333" stroke-width="0.7"/>
<rect x="1117.2" y="642.7" width="5.6" height="5.6" rx="1" fill="#fff" stroke="#333" stroke-width="0.7"/>
<rect x="1171.2" y="642.7" width="5.6" height="5.6" rx="1" fill="#fff" stroke="#333" stroke-width="0.7"/>
<circle cx="1146.5" cy="618" r="5.3" fill="#f9c21e" stroke="#7a5800" stroke-width="1"/>
<rect x="458.7" y="768.7" width="5.6" height="5.6" rx="1" fill="#fff" stroke="#333" stroke-width="0.7"/>
<rect x="521.7" y="768.7" width="5.6" height="5.6" rx="1" fill="#fff" stroke="#333" stroke-width="0.7"/>
<rect x="458.7" y="821.2" width="5.6" height="5.6" rx="1" fill="#fff" stroke="#333" stroke-width="0.7"/>
<rect x="521.7" y="821.2" width="5.6" height="5.6" rx="1" fill="#fff" stroke="#333" stroke-width="0.7"/>
<circle cx="492" cy="797" r="5.3" fill="#f9c21e" stroke="#7a5800" stroke-width="1"/>
<rect x="590.2" y="768.7" width="5.6" height="5.6" rx="1" fill="#fff" stroke="#333" stroke-width="0.7"/>
<rect x="639.2" y="768.7" width="5.6" height="5.6" rx="1" fill="#fff" stroke="#333" stroke-width="0.7"/>
<rect x="590.2" y="815.7" width="5.6" height="5.6" rx="1" fill="#fff" stroke="#333" stroke-width="0.7"/>
<rect x="639.2" y="815.7" width="5.6" height="5.6" rx="1" fill="#fff" stroke="#333" stroke-width="0.7"/>
<circle cx="615.5" cy="794.5" r="5.3" fill="#f9c21e" stroke="#7a5800" stroke-width="1"/>
<rect x="732.2" y="768.7" width="5.6" height="5.6" rx="1" fill="#fff" stroke="#333" stroke-width="0.7"/>
<rect x="780.2" y="768.7" width="5.6" height="5.6" rx="1" fill="#fff" stroke="#333" stroke-width="0.7"/>
<rect x="732.2" y="815.7" width="5.6" height="5.6" rx="1" fill="#fff" stroke="#333" stroke-width="0.7"/>
<rect x="780.2" y="815.7" width="5.6" height="5.6" rx="1" fill="#fff" stroke="#333" stroke-width="0.7"/>
<circle cx="758.5" cy="794.5" r="5.3" fill="#f9c21e" stroke="#7a5800" stroke-width="1"/>
<rect x="859.7" y="768.7" width="5.6" height="5.6" rx="1" fill="#fff" stroke="#333" stroke-width="0.7"/>
<rect x="909.2" y="768.7" width="5.6" height="5.6" rx="1" fill="#fff" stroke="#333" stroke-width="0.7"/>
<rect x="859.7" y="815.7" width="5.6" height="5.6" rx="1" fill="#fff" stroke="#333" stroke-width="0.7"/>
<rect x="909.2" y="815.7" width="5.6" height="5.6" rx="1" fill="#fff" stroke="#333" stroke-width="0.7"/>
<circle cx="887.5" cy="794.5" r="5.3" fill="#f9c21e" stroke="#7a5800" stroke-width="1"/>
<rect x="989.2" y="768.7" width="5.6" height="5.6" rx="1" fill="#fff" stroke="#333" stroke-width="0.7"/>
<rect x="1038.2" y="768.7" width="5.6" height="5.6" rx="1" fill="#fff" stroke="#333" stroke-width="0.7"/>
<rect x="989.2" y="815.7" width="5.6" height="5.6" rx="1" fill="#fff" stroke="#333" stroke-width="0.7"/>
<rect x="1038.2" y="815.7" width="5.6" height="5.6" rx="1" fill="#fff" stroke="#333" stroke-width="0.7"/>
<circle cx="1015.5" cy="794.5" r="5.3" fill="#f9c21e" stroke="#7a5800" stroke-width="1"/>
<rect x="1120.2" y="768.7" width="5.6" height="5.6" rx="1" fill="#fff" stroke="#333" stroke-width="0.7"/>
<rect x="1169.2" y="768.7" width="5.6" height="5.6" rx="1" fill="#fff" stroke="#333" stroke-width="0.7"/>
<rect x="1120.2" y="815.7" width="5.6" height="5.6" rx="1" fill="#fff" stroke="#333" stroke-width="0.7"/>
<rect x="1169.2" y="815.7" width="5.6" height="5.6" rx="1" fill="#fff" stroke="#333" stroke-width="0.7"/>
<circle cx="1146.5" cy="794.5" r="5.3" fill="#f9c21e" stroke="#7a5800" stroke-width="1"/>
<text x="493.0" y="238.0" font-family="Liberation Sans" font-size="14" text-anchor="middle" fill="#000" fill-opacity="0.66" stroke="#000" stroke-opacity="0.5" stroke-width="0.35">7.61</text>
<text x="616.0" y="238.0" font-family="Liberation Sans" font-size="14" text-anchor="middle" fill="#000" fill-opacity="0.66" stroke="#000" stroke-opacity="0.5" stroke-width="0.35">6.73</text>
<text x="760.0" y="238.0" font-family="Liberation Sans" font-size="14" text-anchor="middle" fill="#000" fill-opacity="0.66" stroke="#000" stroke-opacity="0.5" stroke-width="0.35">6.71</text>
<text x="889.0" y="238.0" font-family="Liberation Sans" font-size="14" text-anchor="middle" fill="#000" fill-opacity="0.66" stroke="#000" stroke-opacity="0.5" stroke-width="0.35">6.71</text>
<text x="1016.0" y="235.5" font-family="Liberation Sans" font-size="14" text-anchor="middle" fill="#000" fill-opacity="0.66" stroke="#000" stroke-opacity="0.5" stroke-width="0.35">6.45</text>
<text x="1147.0" y="235.5" font-family="Liberation Sans" font-size="14" text-anchor="middle" fill="#000" fill-opacity="0.66" stroke="#000" stroke-opacity="0.5" stroke-width="0.35">7.93</text>
<text x="493.0" y="344.0" font-family="Liberation Sans" font-size="14" text-anchor="middle" fill="#000" fill-opacity="0.66" stroke="#000" stroke-opacity="0.5" stroke-width="0.35">7.76</text>
<text x="611.5" y="342.0" font-family="Liberation Sans" font-size="14" text-anchor="middle" fill="#000" fill-opacity="0.66" stroke="#000" stroke-opacity="0.5" stroke-width="0.35">9.25</text>
<text x="764.5" y="342.0" font-family="Liberation Sans" font-size="14" text-anchor="middle" fill="#000" fill-opacity="0.66" stroke="#000" stroke-opacity="0.5" stroke-width="0.35">10.01</text>
<text x="890.5" y="342.0" font-family="Liberation Sans" font-size="14" text-anchor="middle" fill="#000" fill-opacity="0.66" stroke="#000" stroke-opacity="0.5" stroke-width="0.35">9.89</text>
<text x="1016.25" y="342.0" font-family="Liberation Sans" font-size="14" text-anchor="middle" fill="#000" fill-opacity="0.66" stroke="#000" stroke-opacity="0.5" stroke-width="0.35">0</text>
<text x="1148.0" y="342.0" font-family="Liberation Sans" font-size="14" text-anchor="middle" fill="#000" fill-opacity="0.66" stroke="#000" stroke-opacity="0.5" stroke-width="0.35">8.89</text>
<text x="493.0" y="509.0" font-family="Liberation Sans" font-size="14" text-anchor="middle" fill="#000" fill-opacity="0.66" stroke="#000" stroke-opacity="0.5" stroke-width="0.35">7.52</text>
<text x="616.0" y="487.5" font-family="Liberation Sans" font-size="14" text-anchor="middle" fill="#000" fill-opacity="0.66" stroke="#000" stroke-opacity="0.5" stroke-width="0.35">6.61</text>
<text x="760.0" y="487.5" font-family="Liberation Sans" font-size="14" text-anchor="middle" fill="#000" fill-opacity="0.66" stroke="#000" stroke-opacity="0.5" stroke-width="0.35">6.62</text>
<text x="884.75" y="503.5" font-family="Liberation Sans" font-size="14" text-anchor="middle" fill="#000" fill-opacity="0.66" stroke="#000" stroke-opacity="0.5" stroke-width="0.35">8.23</text>
<text x="1016.0" y="503.0" font-family="Liberation Sans" font-size="14" text-anchor="middle" fill="#000" fill-opacity="0.66" stroke="#000" stroke-opacity="0.5" stroke-width="0.35">7.48</text>
<text x="1147.0" y="503.0" font-family="Liberation Sans" font-size="14" text-anchor="middle" fill="#000" fill-opacity="0.66" stroke="#000" stroke-opacity="0.5" stroke-width="0.35">7.29</text>
<text x="493.0" y="648.5" font-family="Liberation Sans" font-size="14" text-anchor="middle" fill="#000" fill-opacity="0.66" stroke="#000" stroke-opacity="0.5" stroke-width="0.35">7.47</text>
<text x="616.0" y="646.5" font-family="Liberation Sans" font-size="14" text-anchor="middle" fill="#000" fill-opacity="0.66" stroke="#000" stroke-opacity="0.5" stroke-width="0.35">7.06</text>
<text x="760.0" y="646.5" font-family="Liberation Sans" font-size="14" text-anchor="middle" fill="#000" fill-opacity="0.66" stroke="#000" stroke-opacity="0.5" stroke-width="0.35">7.04</text>
<text x="888.5" y="646.5" font-family="Liberation Sans" font-size="14" text-anchor="middle" fill="#000" fill-opacity="0.66" stroke="#000" stroke-opacity="0.5" stroke-width="0.35">8.57</text>
<text x="1016.0" y="646.5" font-family="Liberation Sans" font-size="14" text-anchor="middle" fill="#000" fill-opacity="0.66" stroke="#000" stroke-opacity="0.5" stroke-width="0.35">8.53</text>
<text x="1147.0" y="646.5" font-family="Liberation Sans" font-size="14" text-anchor="middle" fill="#000" fill-opacity="0.66" stroke="#000" stroke-opacity="0.5" stroke-width="0.35">6.18</text>
<text x="493.0" y="825.5" font-family="Liberation Sans" font-size="14" text-anchor="middle" fill="#000" fill-opacity="0.66" stroke="#000" stroke-opacity="0.5" stroke-width="0.35">7.03</text>
<text x="617.5" y="823.0" font-family="Liberation Sans" font-size="14" text-anchor="middle" fill="#000" fill-opacity="0.66" stroke="#000" stroke-opacity="0.5" stroke-width="0.35">7.57</text>
<text x="759.0" y="823.0" font-family="Liberation Sans" font-size="14" text-anchor="middle" fill="#000" fill-opacity="0.66" stroke="#000" stroke-opacity="0.5" stroke-width="0.35">7.54</text>
<text x="887.25" y="823.0" font-family="Liberation Sans" font-size="14" text-anchor="middle" fill="#000" fill-opacity="0.66" stroke="#000" stroke-opacity="0.5" stroke-width="0.35">7.58</text>
<text x="1016.5" y="823.0" font-family="Liberation Sans" font-size="14" text-anchor="middle" fill="#000" fill-opacity="0.66" stroke="#000" stroke-opacity="0.5" stroke-width="0.35">7.54</text>
<text x="1147.5" y="823.0" font-family="Liberation Sans" font-size="14" text-anchor="middle" fill="#000" fill-opacity="0.66" stroke="#000" stroke-opacity="0.5" stroke-width="0.35">5.7</text>
<circle cx="759.5" cy="239" r="5.3" fill="#f9c21e" stroke="#7a5800" stroke-width="1"/>
<text x="759.5" y="268" font-family="Liberation Sans" font-size="14" text-anchor="middle" fill="#000" fill-opacity="0.66" stroke="#000" stroke-opacity="0.5" stroke-width="0.35">5.57</text>
<circle cx="888" cy="239" r="5.3" fill="#f9c21e" stroke="#7a5800" stroke-width="1"/>
<text x="888" y="268" font-family="Liberation Sans" font-size="14" text-anchor="middle" fill="#000" fill-opacity="0.66" stroke="#000" stroke-opacity="0.5" stroke-width="0.35">5.53</text>
<circle cx="608.5" cy="341" r="5.3" fill="#f9c21e" stroke="#7a5800" stroke-width="1"/>
<text x="608.5" y="370" font-family="Liberation Sans" font-size="14" text-anchor="middle" fill="#000" fill-opacity="0.66" stroke="#000" stroke-opacity="0.5" stroke-width="0.35">6.32</text>
<circle cx="762.5" cy="287" r="5.3" fill="#f9c21e" stroke="#7a5800" stroke-width="1"/>
<text x="762.5" y="316" font-family="Liberation Sans" font-size="14" text-anchor="middle" fill="#000" fill-opacity="0.66" stroke="#000" stroke-opacity="0.5" stroke-width="0.35">7.01</text>
<circle cx="891" cy="287" r="5.3" fill="#f9c21e" stroke="#7a5800" stroke-width="1"/>
<text x="891" y="316" font-family="Liberation Sans" font-size="14" text-anchor="middle" fill="#000" fill-opacity="0.66" stroke="#000" stroke-opacity="0.5" stroke-width="0.35">7</text>
<circle cx="490.5" cy="508.5" r="5.3" fill="#f9c21e" stroke="#7a5800" stroke-width="1"/>
<text x="490.5" y="537.5" font-family="Liberation Sans" font-size="14" text-anchor="middle" fill="#000" fill-opacity="0.66" stroke="#000" stroke-opacity="0.5" stroke-width="0.35">4.99</text>
<circle cx="886" cy="443.5" r="5.3" fill="#f9c21e" stroke="#7a5800" stroke-width="1"/>
<text x="886" y="472.5" font-family="Liberation Sans" font-size="14" text-anchor="middle" fill="#000" fill-opacity="0.66" stroke="#000" stroke-opacity="0.5" stroke-width="0.35">4.88</text>
</svg>
<svg class="a" style="left:0;top:915px" width="200" height="26">
<rect x="0" y="1" width="23" height="21" fill="#f0f0f0"/>
<rect x="22" y="1" width="1.5" height="22" fill="#a8a8a8"/><rect x="0" y="21" width="23.5" height="1.5" fill="#a8a8a8"/>
<rect x="26" y="1" width="23" height="21" fill="#f0f0f0"/>
<rect x="48" y="1" width="1.5" height="22" fill="#a8a8a8"/><rect x="26" y="21" width="23.5" height="1.5" fill="#a8a8a8"/>
<rect x="52" y="1" width="23" height="21" fill="#f0f0f0"/>
<rect x="74" y="1" width="1.5" height="22" fill="#a8a8a8"/><rect x="52" y="21" width="23.5" height="1.5" fill="#a8a8a8"/>
<rect x="78" y="1" width="23" height="21" fill="#f0f0f0"/>
<rect x="100" y="1" width="1.5" height="22" fill="#a8a8a8"/><rect x="78" y="21" width="23.5" height="1.5" fill="#a8a8a8"/>
<rect x="7" y="5.5" width="2" height="12" fill="#111"/><path d="M16 5.5 L9.5 11.5 L16 17.5Z" fill="#111"/>
<path d="M41 5.5 L35 11.5 L41 17.5Z" fill="#9a9a9a"/>
<path d="M61 5.5 L67 11.5 L61 17.5Z" fill="#9a9a9a"/>
<path d="M86 5.5 L92.5 11.5 L86 17.5Z" fill="#111"/><rect x="93" y="5.5" width="2" height="12" fill="#111"/>
<path d="M105 0 L116 21.5 L182 21.5 L193 0" fill="#f7f7f7" stroke="#222" stroke-width="1.3"/>
</svg>
<div class="t" style="left:119.00px;top:918.80px;font-size:15px;font-family:'Liberation Sans',sans-serif;font-weight:bold;color:#111;transform:scaleX(1.1151);transform-origin:0 0;">Stage 1</div>
<div class="a" style="left:1418px;top:942px;width:166px;height:23px;background:#fff;border-bottom:1px solid #a0a0a0"></div>
<div class="a" style="left:0;top:966px;width:1612px;height:1px;background:#a0a0a0"></div>
<div class="t" style="left:3.00px;top:974.30px;font-size:15px;font-family:'Liberation Sans',sans-serif;color:#222;transform:scaleX(0.9110);transform-origin:0 0;">Ready</div>
<div class="t" style="left:1000.80px;top:974.00px;font-size:15px;font-family:'Liberation Sans',sans-serif;color:#222;transform:scaleX(0.9287);transform-origin:0 0;">DATA TIPS MIN</div>
<div class="t" style="left:1117.50px;top:974.00px;font-size:15px;font-family:'Liberation Sans',sans-serif;color:#222;transform:scaleX(0.9136);transform-origin:0 0;">SNAP</div>
<div class="t" style="left:1165.00px;top:974.00px;font-size:15px;font-family:'Liberation Sans',sans-serif;color:#8a8a8a;transform:scaleX(0.8667);transform-origin:0 0;">GRID</div>
<div class="t" style="left:1207.50px;top:974.00px;font-size:15px;font-family:'Liberation Sans',sans-serif;color:#222;transform:scaleX(0.8963);transform-origin:0 0;">ORTHO</div>
<div class="t" style="left:1267.50px;top:974.00px;font-size:15px;font-family:'Liberation Sans',sans-serif;color:#222;transform:scaleX(0.9390);transform-origin:0 0;">OSNAP</div>
<div class="t" style="left:1330.00px;top:974.00px;font-size:15px;font-family:'Liberation Sans',sans-serif;color:#8a8a8a;transform:scaleX(0.8396);transform-origin:0 0;">VERT OFF</div>
<div class="t" style="left:1405.00px;top:974.00px;font-size:15px;font-family:'Liberation Sans',sans-serif;color:#8a8a8a;">DIM</div>
<div class="t" style="left:1441.70px;top:974.00px;font-size:15px;font-family:'Liberation Sans',sans-serif;color:#222;transform:scaleX(0.9159);transform-origin:0 0;">-29.471,&nbsp; 15.596</div>
<div class="a" style="left:1110.5px;top:969px;width:1px;height:22px;background:#d4d4d4"></div>
<div class="a" style="left:1158.5px;top:969px;width:1px;height:22px;background:#d4d4d4"></div>
<div class="a" style="left:1200px;top:969px;width:1px;height:22px;background:#d4d4d4"></div>
<div class="a" style="left:1260px;top:969px;width:1px;height:22px;background:#d4d4d4"></div>
<div class="a" style="left:1320px;top:969px;width:1px;height:22px;background:#d4d4d4"></div>
<div class="a" style="left:1398.5px;top:969px;width:1px;height:22px;background:#d4d4d4"></div>
<div class="a" style="left:1436px;top:969px;width:1px;height:22px;background:#d4d4d4"></div>
<div class="a" style="left:1610px;top:969px;width:1px;height:22px;background:#d4d4d4"></div>
<div class="a" style="left:1612px;top:101px;width:305px;height:890px;background:#f0f0f0"></div>
<div class="a" style="left:1611px;top:101px;width:1px;height:890px;background:#8a8a8a"></div>
<div class="a" style="left:1622px;top:101px;width:2px;height:890px;background:#7c7c7c"></div>
<div class="a" style="left:1612px;top:101px;width:305px;height:1px;background:#9a9a9a"></div>
<div class="a" style="left:1624px;top:102px;width:293px;height:889px;background:#f7f7f7"></div>
<svg class="a" style="left:1612px;top:440px" width="10" height="200"><rect x="0" y="27" width="10" height="1" fill="#a0a0a0"/><rect x="0" y="184" width="10" height="1" fill="#a0a0a0"/><path d="M2.5 31.5 L7 36 L2.5 40.5Z" fill="#111"/><path d="M2.5 101.5 L7 106 L2.5 110.5Z" fill="#111"/><path d="M2.5 171.5 L7 176 L2.5 180.5Z" fill="#111"/><rect x="4" y="46" width="1" height="1.5" fill="#999"/><rect x="4" y="51" width="1" height="1.5" fill="#999"/><rect x="4" y="56" width="1" height="1.5" fill="#999"/><rect x="4" y="61" width="1" height="1.5" fill="#999"/><rect x="4" y="66" width="1" height="1.5" fill="#999"/><rect x="4" y="71" width="1" height="1.5" fill="#999"/><rect x="4" y="76" width="1" height="1.5" fill="#999"/><rect x="4" y="81" width="1" height="1.5" fill="#999"/><rect x="4" y="86" width="1" height="1.5" fill="#999"/><rect x="4" y="91" width="1" height="1.5" fill="#999"/><rect x="4" y="96" width="1" height="1.5" fill="#999"/><rect x="4" y="116" width="1" height="1.5" fill="#999"/><rect x="4" y="121" width="1" height="1.5" fill="#999"/><rect x="4" y="126" width="1" height="1.5" fill="#999"/><rect x="4" y="131" width="1" height="1.5" fill="#999"/><rect x="4" y="136" width="1" height="1.5" fill="#999"/><rect x="4" y="141" width="1" height="1.5" fill="#999"/><rect x="4" y="146" width="1" height="1.5" fill="#999"/><rect x="4" y="151" width="1" height="1.5" fill="#999"/><rect x="4" y="156" width="1" height="1.5" fill="#999"/><rect x="4" y="161" width="1" height="1.5" fill="#999"/><rect x="4" y="166" width="1" height="1.5" fill="#999"/></svg>
<div class="a" style="left:1630px;top:110px;width:283px;height:19.5px;background:linear-gradient(to right,#d6e8f8 0%,#bcd8f2 45%,#8fbfec 75%,#4e97e0 100%)"></div>
<svg class="a" style="left:1636px;top:115px" width="16" height="10"><path d="M1 1 L13 1 L7 7.5Z" fill="#3d7cc4"/></svg>
<div class="t" style="left:1729.00px;top:112.60px;font-size:15px;font-family:'Liberation Sans',sans-serif;font-weight:bold;color:#15304f;transform:scaleX(0.9717);transform-origin:0 0;-webkit-text-stroke:0.35px #15304f;">Contour Legend</div>
<div class="t" style="left:1633.00px;top:142.64px;font-size:13px;font-family:'Liberation Mono',monospace;font-weight:bold;color:#111;transform:scaleX(1.1054);transform-origin:0 0;">Total Settlement (mm)</div>
<div class="a" style="left:1633px;top:164px;width:61px;height:206px;background:linear-gradient(to bottom,#0000f0 0.0%,#0060ff 10.0%,#00b4ff 20.0%,#00f4ff 27.0%,#00ffff 30.0%,#00f5a0 40.0%,#00e600 50.8%,#6ee600 60.0%,#ffff00 75.7%,#ffd200 80.0%,#ff8200 90.0%,#ff2000 100.0%);border:1px solid #222"></div>
<div class="a" style="left:1693px;top:163.8px;width:7px;height:1.5px;background:#222"></div>
<div class="t" style="left:1716.80px;top:159.14px;font-size:13px;font-family:'Liberation Mono',monospace;font-weight:bold;color:#111;transform:scaleX(1.1030);transform-origin:0 0;">0.0</div>
<div class="a" style="left:1693px;top:184.3px;width:7px;height:1.5px;background:#222"></div>
<div class="t" style="left:1716.80px;top:179.64px;font-size:13px;font-family:'Liberation Mono',monospace;font-weight:bold;color:#111;transform:scaleX(1.1030);transform-origin:0 0;">1.5</div>
<div class="a" style="left:1693px;top:204.8px;width:7px;height:1.5px;background:#222"></div>
<div class="t" style="left:1716.80px;top:200.14px;font-size:13px;font-family:'Liberation Mono',monospace;font-weight:bold;color:#111;transform:scaleX(1.1030);transform-origin:0 0;">3.0</div>
<div class="a" style="left:1693px;top:225.3px;width:7px;height:1.5px;background:#222"></div>
<div class="t" style="left:1716.80px;top:220.64px;font-size:13px;font-family:'Liberation Mono',monospace;font-weight:bold;color:#111;transform:scaleX(1.1030);transform-origin:0 0;">4.5</div>
<div class="a" style="left:1693px;top:245.8px;width:7px;height:1.5px;background:#222"></div>
<div class="t" style="left:1716.80px;top:241.14px;font-size:13px;font-family:'Liberation Mono',monospace;font-weight:bold;color:#111;transform:scaleX(1.1030);transform-origin:0 0;">6.0</div>
<div class="a" style="left:1693px;top:266.3px;width:7px;height:1.5px;background:#222"></div>
<div class="t" style="left:1716.80px;top:261.64px;font-size:13px;font-family:'Liberation Mono',monospace;font-weight:bold;color:#111;transform:scaleX(1.1030);transform-origin:0 0;">7.5</div>
<div class="a" style="left:1693px;top:286.8px;width:7px;height:1.5px;background:#222"></div>
<div class="t" style="left:1716.80px;top:282.14px;font-size:13px;font-family:'Liberation Mono',monospace;font-weight:bold;color:#111;transform:scaleX(1.1030);transform-origin:0 0;">9.0</div>
<div class="a" style="left:1693px;top:307.3px;width:7px;height:1.5px;background:#222"></div>
<div class="t" style="left:1716.80px;top:302.64px;font-size:13px;font-family:'Liberation Mono',monospace;font-weight:bold;color:#111;transform:scaleX(1.1030);transform-origin:0 0;">10.5</div>
<div class="a" style="left:1693px;top:327.8px;width:7px;height:1.5px;background:#222"></div>
<div class="t" style="left:1716.80px;top:323.14px;font-size:13px;font-family:'Liberation Mono',monospace;font-weight:bold;color:#111;transform:scaleX(1.1030);transform-origin:0 0;">12.0</div>
<div class="a" style="left:1693px;top:348.3px;width:7px;height:1.5px;background:#222"></div>
<div class="t" style="left:1716.80px;top:343.64px;font-size:13px;font-family:'Liberation Mono',monospace;font-weight:bold;color:#111;transform:scaleX(1.1030);transform-origin:0 0;">13.5</div>
<div class="a" style="left:1693px;top:368.8px;width:7px;height:1.5px;background:#222"></div>
<div class="t" style="left:1716.80px;top:364.14px;font-size:13px;font-family:'Liberation Mono',monospace;font-weight:bold;color:#111;transform:scaleX(1.1030);transform-origin:0 0;">15.0</div>
<div class="t" style="left:1633.00px;top:381.04px;font-size:13px;font-family:'Liberation Mono',monospace;font-weight:bold;color:#111;transform:scaleX(1.1158);transform-origin:0 0;">max (stage): 10.0 mm</div>
<div class="t" style="left:1633.00px;top:399.04px;font-size:13px;font-family:'Liberation Mono',monospace;font-weight:bold;color:#111;transform:scaleX(1.1158);transform-origin:0 0;">max (all):&nbsp;&nbsp; 10.0 mm</div>
<div class="a" style="left:1630px;top:421px;width:283px;height:19.5px;background:linear-gradient(to right,#d6e8f8 0%,#bcd8f2 45%,#8fbfec 75%,#4e97e0 100%)"></div>
<svg class="a" style="left:1636px;top:426px" width="16" height="10"><path d="M1 1 L13 1 L7 7.5Z" fill="#3d7cc4"/></svg>
<div class="t" style="left:1765.60px;top:423.60px;font-size:15px;font-family:'Liberation Sans',sans-serif;font-weight:bold;color:#15304f;transform:scaleX(0.9792);transform-origin:0 0;-webkit-text-stroke:0.35px #15304f;">Depth</div>
<div class="a" style="left:1639px;top:447px;width:98px;height:29px;background:#fff;border-bottom:1px solid #a8a8a8;border-left:1px solid #e0e0e0"></div>
<div class="t" style="left:1673.80px;top:453.30px;font-size:15px;font-family:'Liberation Sans',sans-serif;color:#111;transform:scaleX(1.0187);transform-origin:0 0;">0</div>
<div class="a" style="left:1715px;top:448px;width:20px;height:13px;background:#eaeaea;border:1px solid #c4c4c4"></div>
<div class="a" style="left:1715px;top:461px;width:20px;height:13px;background:#eaeaea;border:1px solid #c4c4c4"></div>
<svg class="a" style="left:1715px;top:448px" width="20" height="26"><path d="M6.5 8.5 L13.5 8.5 L10 4.5Z" fill="#222"/><path d="M6.5 17.5 L13.5 17.5 L10 21.5Z" fill="#222"/></svg>
<div class="t" style="left:1744.30px;top:453.30px;font-size:15px;font-family:'Liberation Sans',sans-serif;color:#111;transform:scaleX(0.8400);transform-origin:0 0;">m</div>
<div class="a" style="left:1881px;top:448px;width:31px;height:30px;background:linear-gradient(#e4f0fb,#c8def5);border:1.5px solid #6a9bd0;border-radius:4px"></div>
<svg class="a" style="left:1886px;top:452px" width="20" height="22" viewBox="0 0 20 22"><path d="M6 10 V7 a4 4 0 0 1 8 0 V10" fill="none" stroke="#5a5a20" stroke-width="1.8"/><rect x="4.5" y="9.5" width="11" height="9" rx="1" fill="#e8d030" stroke="#6a5a10" stroke-width="1"/><rect x="9" y="12" width="2" height="4" fill="#6a5a10"/></svg>
<svg class="a" style="left:1630px;top:485px" width="120" height="245">
<defs><linearGradient id="s1" x1="0" x2="1"><stop offset="0" stop-color="#e8e0a8"/><stop offset="0.5" stop-color="#faf6d0"/><stop offset="1" stop-color="#e0d8a0"/></linearGradient><linearGradient id="s2" x1="0" x2="1"><stop offset="0" stop-color="#a8c0a0"/><stop offset="0.5" stop-color="#d4e4cc"/><stop offset="1" stop-color="#a4bc9c"/></linearGradient><linearGradient id="s3" x1="0" x2="1"><stop offset="0" stop-color="#e0b08a"/><stop offset="0.5" stop-color="#fcd8b8"/><stop offset="1" stop-color="#dcac86"/></linearGradient></defs>
<rect x="11.5" y="12.5" width="54" height="34" fill="url(#s1)" stroke="#222" stroke-width="1.2"/>
<rect x="11.5" y="48.5" width="54" height="118" fill="url(#s2)" stroke="#222" stroke-width="1.2"/>
<rect x="11.5" y="169.5" width="54" height="61" fill="url(#s3)" stroke="#222" stroke-width="1.2"/>
<path d="M6 8 L11 13 L6 18Z" fill="#111"/>
<path d="M73 12.5 H84 V231 H73 M73 48.5 H84 M73 169.5 H84" fill="none" stroke="#222" stroke-width="1.3"/>
</svg>
<div class="t" style="left:1717.00px;top:493.04px;font-size:13px;font-family:'Liberation Mono',monospace;color:#111;transform:scaleX(1.1116);transform-origin:0 0;">0 m</div>
<div class="t" style="left:1717.00px;top:530.04px;font-size:13px;font-family:'Liberation Mono',monospace;color:#111;transform:scaleX(1.0902);transform-origin:0 0;">12</div>
<div class="t" style="left:1717.00px;top:650.04px;font-size:13px;font-family:'Liberation Mono',monospace;color:#111;transform:scaleX(1.0902);transform-origin:0 0;">52</div>
<div class="t" style="left:1717.00px;top:712.04px;font-size:13px;font-family:'Liberation Mono',monospace;color:#111;transform:scaleX(1.0902);transform-origin:0 0;">72 m</div>
<div class="a" style="left:1630px;top:744px;width:283px;height:18.5px;background:linear-gradient(to right,#d6e8f8 0%,#bcd8f2 45%,#8fbfec 75%,#4e97e0 100%)"></div>
<svg class="a" style="left:1636px;top:749px" width="16" height="10"><path d="M1 1 L13 1 L7 7.5Z" fill="#3d7cc4"/></svg>
<div class="t" style="left:1738.00px;top:746.60px;font-size:15px;font-family:'Liberation Sans',sans-serif;font-weight:bold;color:#15304f;transform:scaleX(0.9554);transform-origin:0 0;-webkit-text-stroke:0.35px #15304f;">View Controls</div>
<div class="a" style="left:1630px;top:770px;width:284px;height:213px;background:#fff;border:1px solid #a0a0a0"></div>
<svg class="a" style="left:1630px;top:770px" width="120" height="110"><rect x="11.5" y="7.5" width="10" height="10" fill="#f4f4f4" stroke="#999" stroke-width="1"/><path d="M14 12.5 H19 M16.5 10 V15" stroke="#333" stroke-width="1"/><rect x="16" y="18" width="1" height="1" fill="#999"/><rect x="16" y="20" width="1" height="1" fill="#999"/><rect x="16" y="22" width="1" height="1" fill="#999"/><rect x="16" y="24" width="1" height="1" fill="#999"/><rect x="16" y="26" width="1" height="1" fill="#999"/><rect x="16" y="28" width="1" height="1" fill="#999"/><rect x="16" y="30" width="1" height="1" fill="#999"/><rect x="16" y="32" width="1" height="1" fill="#999"/><rect x="16" y="34" width="1" height="1" fill="#999"/><rect x="16" y="36" width="1" height="1" fill="#999"/><rect x="16" y="38" width="1" height="1" fill="#999"/><rect x="16" y="40" width="1" height="1" fill="#999"/><rect x="16" y="42" width="1" height="1" fill="#999"/><rect x="16" y="44" width="1" height="1" fill="#999"/><rect x="16" y="46" width="1" height="1" fill="#999"/><rect x="16" y="48" width="1" height="1" fill="#999"/><rect x="16" y="50" width="1" height="1" fill="#999"/><rect x="16" y="52" width="1" height="1" fill="#999"/><rect x="16" y="54" width="1" height="1" fill="#999"/><rect x="16" y="56" width="1" height="1" fill="#999"/><rect x="16" y="58" width="1" height="1" fill="#999"/><rect x="16" y="60" width="1" height="1" fill="#999"/><rect x="16" y="62" width="1" height="1" fill="#999"/><rect x="16" y="64" width="1" height="1" fill="#999"/><rect x="16" y="66" width="1" height="1" fill="#999"/><rect x="16" y="68" width="1" height="1" fill="#999"/><rect x="16" y="70" width="1" height="1" fill="#999"/><rect x="16" y="72" width="1" height="1" fill="#999"/><rect x="16" y="74" width="1" height="1" fill="#999"/><rect x="16" y="76" width="1" height="1" fill="#999"/><rect x="16" y="78" width="1" height="1" fill="#999"/><rect x="16" y="80" width="1" height="1" fill="#999"/><rect x="16" y="82" width="1" height="1" fill="#999"/><rect x="16" y="84" width="1" height="1" fill="#999"/><rect x="16" y="86" width="1" height="1" fill="#999"/><rect x="16" y="88" width="1" height="1" fill="#999"/><rect x="16" y="90" width="1" height="1" fill="#999"/><rect x="18" y="32" width="1" height="1" fill="#999"/><rect x="20" y="32" width="1" height="1" fill="#999"/><rect x="22" y="32" width="1" height="1" fill="#999"/><rect x="24" y="32" width="1" height="1" fill="#999"/><rect x="26" y="32" width="1" height="1" fill="#999"/><rect x="28" y="32" width="1" height="1" fill="#999"/><rect x="30" y="32" width="1" height="1" fill="#999"/><rect x="18" y="52" width="1" height="1" fill="#999"/><rect x="20" y="52" width="1" height="1" fill="#999"/><rect x="22" y="52" width="1" height="1" fill="#999"/><rect x="24" y="52" width="1" height="1" fill="#999"/><rect x="26" y="52" width="1" height="1" fill="#999"/><rect x="28" y="52" width="1" height="1" fill="#999"/><rect x="30" y="52" width="1" height="1" fill="#999"/><rect x="18" y="72" width="1" height="1" fill="#999"/><rect x="20" y="72" width="1" height="1" fill="#999"/><rect x="22" y="72" width="1" height="1" fill="#999"/><rect x="24" y="72" width="1" height="1" fill="#999"/><rect x="26" y="72" width="1" height="1" fill="#999"/><rect x="28" y="72" width="1" height="1" fill="#999"/><rect x="30" y="72" width="1" height="1" fill="#999"/><rect x="18" y="92" width="1" height="1" fill="#999"/><rect x="20" y="92" width="1" height="1" fill="#999"/><rect x="22" y="92" width="1" height="1" fill="#999"/><rect x="24" y="92" width="1" height="1" fill="#999"/><rect x="26" y="92" width="1" height="1" fill="#999"/><rect x="28" y="92" width="1" height="1" fill="#999"/><rect x="30" y="92" width="1" height="1" fill="#999"/><rect x="22" y="12" width="1" height="1" fill="#999"/><rect x="24" y="12" width="1" height="1" fill="#999"/><rect x="26" y="12" width="1" height="1" fill="#999"/><rect x="28" y="12" width="1" height="1" fill="#999"/><rect x="30" y="12" width="1" height="1" fill="#999"/><rect x="33.5" y="6.3" width="12" height="12" fill="#fff" stroke="#333" stroke-width="1"/><path d="M36 11.8 L38.8 15.3 L43.5 8.3" fill="none" stroke="#111" stroke-width="2"/><rect x="33.5" y="25.6" width="12" height="12" fill="#fff" stroke="#333" stroke-width="1"/><path d="M36 31.1 L38.8 34.6 L43.5 27.6" fill="none" stroke="#111" stroke-width="2"/><rect x="33.5" y="45.5" width="12" height="12" fill="#fff" stroke="#333" stroke-width="1"/><rect x="33.5" y="65.8" width="12" height="12" fill="#fff" stroke="#333" stroke-width="1"/><path d="M36 71.3 L38.8 74.8 L43.5 67.8" fill="none" stroke="#111" stroke-width="2"/><rect x="33.5" y="85.6" width="12" height="12" fill="#fff" stroke="#333" stroke-width="1"/><path d="M36 91.1 L38.8 94.6 L43.5 87.6" fill="none" stroke="#111" stroke-width="2"/></svg>
<div class="t" style="left:1686.50px;top:775.23px;font-size:14.5px;font-family:'Liberation Sans',sans-serif;color:#111;transform:scaleX(0.8970);transform-origin:0 0;">Point Queries</div>
<div class="t" style="left:1686.50px;top:794.53px;font-size:14.5px;font-family:'Liberation Sans',sans-serif;color:#111;transform:scaleX(0.8927);transform-origin:0 0;">Field Point Grid</div>
<div class="t" style="left:1686.50px;top:814.43px;font-size:14.5px;font-family:'Liberation Sans',sans-serif;color:#111;transform:scaleX(0.8995);transform-origin:0 0;">Deformed Contours</div>
<div class="t" style="left:1686.50px;top:834.73px;font-size:14.5px;font-family:'Liberation Sans',sans-serif;color:#111;transform:scaleX(0.9190);transform-origin:0 0;">Loads</div>
<div class="t" style="left:1686.50px;top:854.53px;font-size:14.5px;font-family:'Liberation Sans',sans-serif;color:#111;transform:scaleX(0.8790);transform-origin:0 0;">Soil Column</div>
</body></html>
